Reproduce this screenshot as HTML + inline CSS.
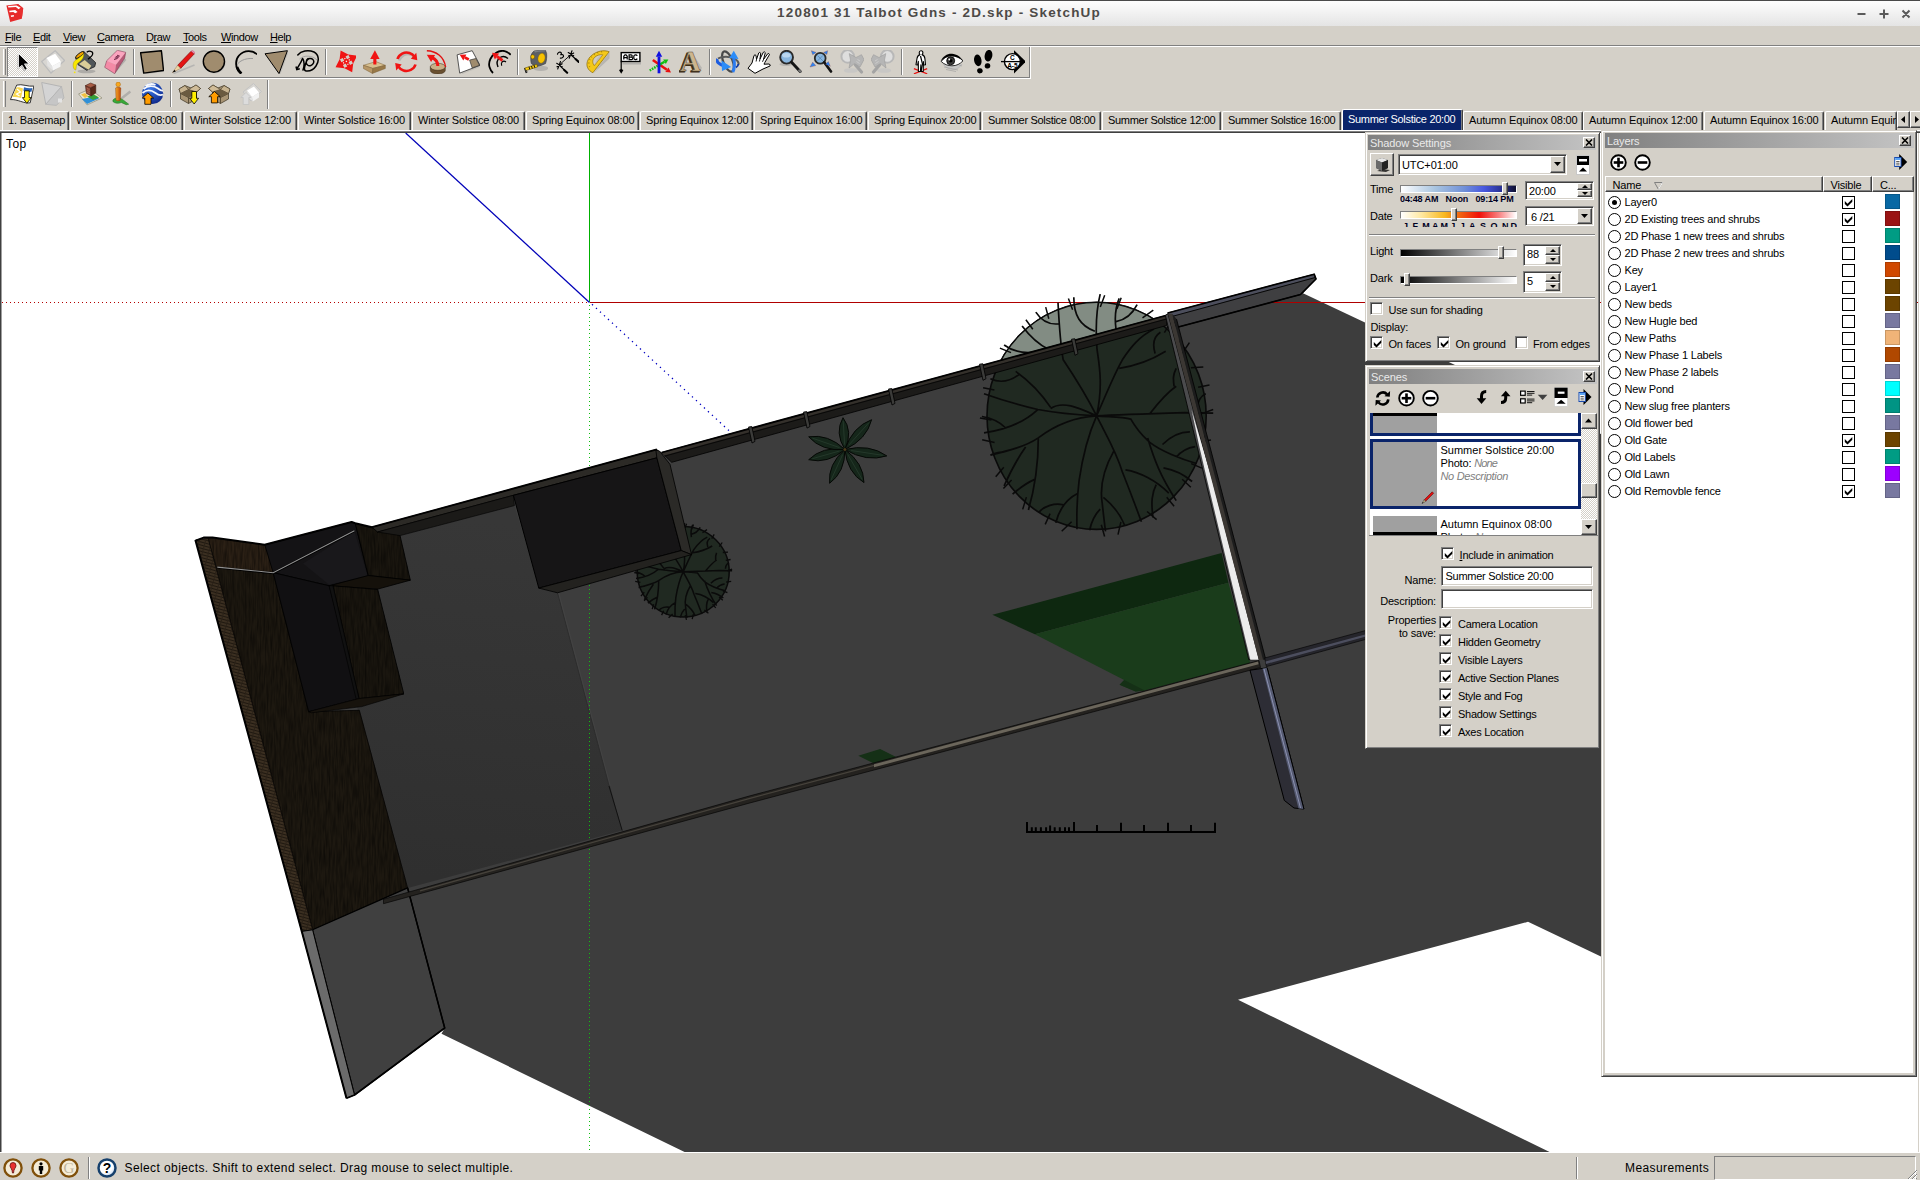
<!DOCTYPE html>
<html><head><meta charset="utf-8"><title>SketchUp</title>
<style>
*{box-sizing:border-box;margin:0;padding:0}
html,body{width:1920px;height:1180px;overflow:hidden}
body{position:relative;background:#d4d0c8;font-family:"Liberation Sans",sans-serif;font-size:11px;color:#000;line-height:13px}
.a{position:absolute}
.t{position:absolute;white-space:nowrap;line-height:13px;font-size:11px;letter-spacing:-.19px}
.m{letter-spacing:-.4px}
u{text-decoration:underline;text-underline-offset:1px}
#title{left:0;top:0;width:1920px;height:26px;background:linear-gradient(#fdfdfd 0,#f6f6f6 30%,#e4e4e4 100%);border-top:1px solid #4a4a4a}
#title .tt{left:0;width:1878px;text-align:center;top:3px;font-weight:bold;font-size:13.500px;line-height:18px;color:#4d4a47;letter-spacing:1.17px}
.sep{position:absolute;width:2px;border-left:1px solid #808080;border-right:1px solid #fff}
.grip{position:absolute;width:3px;border-left:1px solid #fff;border-right:1px solid #808080}
.tab{position:absolute;top:111px;height:19px;border-left:1px solid #fff;border-top:1px solid #fff;border-right:1px solid #404040;box-shadow:inset -1px 0 0 #808080;border-radius:2px 2px 0 0;font-size:11px;line-height:16px;padding-left:5px;white-space:nowrap;overflow:hidden;letter-spacing:-.14px}
.tab.sel{background:#0a246a;color:#fff;top:109px;height:22px;line-height:18px;border-right:1px solid #404040}
.panel{position:absolute;background:#d4d0c8;border:1px solid;border-color:#d4d0c8 #404040 #404040 #d4d0c8;box-shadow:inset 1px 1px 0 #fff,inset -1px -1px 0 #808080}
.ptitle{position:absolute;height:15px;background:linear-gradient(90deg,#808080,#c4c4c4);color:#eaeaea;font-size:11px;line-height:16px;padding-left:2px;white-space:nowrap;letter-spacing:-.1px}
.xbtn{position:absolute;width:12px;height:11px;background:#d4d0c8;border:1px solid;border-color:#fff #404040 #404040 #fff;box-shadow:inset -1px -1px 0 #808080}
.sunk{position:absolute;background:#fff;border:1px solid;border-color:#808080 #fff #fff #808080;box-shadow:inset 1px 1px 0 #404040,inset -1px -1px 0 #d4d0c8}
.cb{position:absolute;width:13px;height:13px;background:#fff;border:1px solid;border-color:#808080 #fff #fff #808080;box-shadow:inset 1px 1px 0 #404040,inset -1px -1px 0 #d4d0c8}
.cb svg{position:absolute;left:2px;top:2px}
.btn{position:absolute;background:#d4d0c8;border:1px solid;border-color:#fff #404040 #404040 #fff;box-shadow:inset -1px -1px 0 #808080,inset 1px 1px 0 #d4d0c8}
.hline{position:absolute;height:2px;border-top:1px solid #808080;border-bottom:1px solid #fff}
.ico{position:absolute;width:24px;height:24px}
.lrow{position:absolute;left:0;width:308px;height:17px}
.radio{position:absolute;left:3px;top:3px;width:13px;height:13px;border:1px solid #000;border-radius:50%;background:#fff}
.radio.on:after{content:"";position:absolute;left:3px;top:3px;width:5px;height:5px;border-radius:50%;background:#000}
.lcb{position:absolute;left:237px;top:3px;width:13px;height:13px;border:1px solid #000;background:#fff}
.lcb svg{position:absolute;left:1px;top:1px}
.sw{position:absolute;left:280px;top:0;width:15px;height:15px;box-shadow:inset 0 0 0 1px rgba(0,0,0,.16)}
i{letter-spacing:-.45px}
</style></head><body>
<div class="a" id="title">
<svg class="a" style="left:5px;top:2px" width="20" height="22" viewBox="5 3 20 22"><path d="M6.400 5.500L18 3.900l5.200 4.300-1.400 10.500-11.600 3.400z" fill="#e62a2a"/><path d="M18 3.900l5.200 4.300-1.400 10.500L18.500 9.300z" fill="#e83030"/><path d="M8.100 6.100l8.500-.5 4 2.200-2.100 1.500-2.600-2.200-7.600.5z" fill="#fff"/><path d="M9.300 10.700l5.900-.7 2.400 2.100-2.400 1.200-1.900-1.400-3.800.4z" fill="#fff"/><path d="M10.700 15.400l3.100-.5.200 1.500-2.800.7z" fill="#fff"/></svg>
<div class="t tt">120801 31 Talbot Gdns - 2D.skp - SketchUp</div>
<svg class="a" style="left:1850px;top:5px" width="66" height="16" viewBox="0 0 66 16"><g stroke="#5a5a5a" stroke-width="2" fill="none"><path d="M7.5 8h8M29.5 8h9M34 3.5v9M52.5 4.5l7 7M59.5 4.5l-7 7"/></g></svg>
</div>
<div class="t m" style="left:5px;top:31px"><u>F</u>ile</div>
<div class="t m" style="left:33px;top:31px"><u>E</u>dit</div>
<div class="t m" style="left:63px;top:31px"><u>V</u>iew</div>
<div class="t m" style="left:97px;top:31px"><u>C</u>amera</div>
<div class="t m" style="left:146px;top:31px">D<u>r</u>aw</div>
<div class="t m" style="left:183px;top:31px"><u>T</u>ools</div>
<div class="t m" style="left:221px;top:31px"><u>W</u>indow</div>
<div class="t m" style="left:270px;top:31px"><u>H</u>elp</div>
<div class="hline" style="left:0;top:45px;width:1920px"></div>
<div class="a" style="left:0;top:78px;width:1031px;height:1px;background:#fff"></div>
<div class="a" style="left:0;top:77px;width:1030px;height:1px;background:#808080"></div>
<div class="a" style="left:1029px;top:47px;width:1px;height:31px;background:#808080"></div><div class="a" style="left:1030px;top:47px;width:1px;height:32px;background:#fff"></div>
<div class="grip" style="left:3px;top:49px;height:26px"></div>
<div class="a" style="left:7px;top:47px;width:31px;height:30px;border:1px solid;border-color:#808080 #fff #fff #808080;background:#fff;background-image:conic-gradient(#d4d0c8 25%,#fff 0 50%,#d4d0c8 0 75%,#fff 0);background-size:2px 2px"></div>
<div class="sep" style="left:133px;top:49px;height:26px"></div>
<div class="sep" style="left:325px;top:49px;height:26px"></div>
<div class="sep" style="left:517px;top:49px;height:26px"></div>
<div class="sep" style="left:709px;top:49px;height:26px"></div>
<div class="sep" style="left:901px;top:49px;height:26px"></div>
<svg class="ico" style="left:10px;top:50px" viewBox="0 0 24 24"><path d="M7.500 5V19.500l3.600-2.800 2.900 4.900 2.300-1.100-2.800-5.200h4.600z" fill="#888" opacity=".5"/><path d="M8.500 3.500V18.100l3.600-2.800 2.900 4.900 2.300-1.100-2.800-5.200h4.600z" fill="#000" stroke="#fff" stroke-width=".8" stroke-linejoin="round"/></svg>
<svg class="ico" style="left:41px;top:50px" viewBox="0 0 24 24"><path d="M0.700 11.600L14.200 0.700l9.400 9.900L10 23.100z" fill="#dcdcdc" fill-opacity=".5" stroke="#bcbcbc" stroke-width="1.300"/><path d="M5.400 8l8.800-4.200 5.700 7.800-8.800 4.700z" fill="#fff"/><path d="M5.400 8l5.700 8.300 1 4.200-5.700-4.700z" fill="#e2e2e2"/><path d="M19.900 11.600l-8.800 4.700 1 4.200 7.300-3.700z" fill="#f6f6f6"/></svg>
<svg class="ico" style="left:72px;top:50px" viewBox="0 0 24 24"><ellipse cx="14.500" cy="21.300" rx="9" ry="1.900" fill="#888" opacity=".5"/><path d="M3.700 8L12 1.700l11.700 11-1 4-8 3.600L6 14.700z" fill="#50565a" stroke="#1c1c1c" stroke-width=".8" stroke-linejoin="round"/><path d="M12.700 10l6.600 5.700-2.600 4L7 14z" fill="#dacd98"/><ellipse cx="7.800" cy="4.900" rx="5.200" ry="1.600" transform="rotate(-37 7.800 4.900)" fill="#f0a000" stroke="#111" stroke-width=".9"/><path d="M14.700 2.300C17 0.500 21 1 20.700 3.700 20.500 6 17.500 8 16 9.300" fill="none" stroke="#000" stroke-width="1.300"/><path d="M11.500 3.500C10 6 7 8 5.500 9 2 10.500 0.800 13 1.200 16.500 1.500 19 3 20 3.700 20 4.500 18 4 15 5.500 13.500 7 12 9 11 10.300 9c1-1.700 1.700-3.500 1.200-5.500z" fill="#f8e800" stroke="#a08800" stroke-width=".4"/><circle cx="2.700" cy="22.300" r=".9" fill="#f8e800"/></svg>
<svg class="ico" style="left:103px;top:50px" viewBox="0 0 24 24"><path d="M11.700 23.700L23.300 10 21.700 8z" fill="#999" opacity=".6"/><path d="M3.700 10.700L14.300 0.300l8.400 2L13 14.700z" fill="#fba5bf"/><path d="M3.700 10.700L13 14.700 11.700 23.700 1.700 17.300z" fill="#f48aa6"/><path d="M13 14.700L22.700 2.300l-1 5.700L11.700 23.700z" fill="#b85876"/><path d="M3.700 10.700L14.300 0.300l8.400 2-1 5.700L11.700 23.700 1.700 17.300z" fill="none" stroke="#703048" stroke-width=".5"/><path d="M11 9.500l3.500-1M11.800 8l3.500-.3M12.800 6.500l3.200.5M14 5.200l2.800 1" stroke="#702848" stroke-width="1"/></svg>
<svg class="ico" style="left:139.5px;top:50px" viewBox="0 0 24 24"><path d="M2 4.200L22.600 2.200l1.300 19.500L5 24.300z" fill="#999" opacity=".35"/><path d="M0.600 2.800L21.400 0.700l2.100 19.800L3.700 23.100z" fill="#a08c6e" stroke="#000" stroke-width="1.400" stroke-linejoin="round"/></svg>
<svg class="ico" style="left:170.5px;top:50px" viewBox="0 0 24 24"><path d="M2.500 23.500L23.500 15" stroke="#aaa" stroke-width="1.800" opacity=".7"/><path d="M6.600 15.300L20.100 1.200l3.200 2.600L9.700 18.400z" fill="#e41414" stroke="#700" stroke-width=".6"/><path d="M20.100 1.200l1.200-1 2.900 2.600-.9 1z" fill="#f494b4" stroke="#a04060" stroke-width=".4"/><path d="M6.600 15.300l3.100 3.100-8.300 4.200z" fill="#ecd4a4" stroke="#806040" stroke-width=".4"/><path d="M3.600 19.800l1.200 1.600-3.400 1.200z" fill="#000"/></svg>
<svg class="ico" style="left:201.5px;top:50px" viewBox="0 0 24 24"><circle cx="12.800" cy="12.600" r="10.700" fill="#999" opacity=".35"/><circle cx="11.900" cy="11.600" r="10.600" fill="#a08c6e" stroke="#000" stroke-width="1.400"/></svg>
<svg class="ico" style="left:232.5px;top:50px" viewBox="0 0 24 24"><path d="M20 8.500C12 8 5 11 2.300 17.500" fill="none" stroke="#999" stroke-width="1"/><path d="M24 4.500C20 0 11.500-0.500 6 5.500 1.500 10.500 2.500 19 7.500 23" fill="none" stroke="#000" stroke-width="1.800"/><path d="M4 17c.8 2.500 2 4.500 4.500 6.500" fill="none" stroke="#000" stroke-width="2.600"/></svg>
<svg class="ico" style="left:263.5px;top:50px" viewBox="0 0 24 24"><path d="M3 5L24.400 2.400 16.500 24z" fill="#999" opacity=".35"/><path d="M1 3.800L23.400 0.700 15 23.600z" fill="#a08c6e" stroke="#000" stroke-width="1"/></svg>
<svg class="ico" style="left:294.5px;top:50px" viewBox="0 0 24 24"><path d="M4.500 9C9 5 17 5 22 10" fill="none" stroke="#999" stroke-width=".8"/><path d="M2.800 5C6 1 13-0.500 19 2c5 2.500 5.500 9 2 14-2 3-6 5.500-10 5-2.500-.5-1.500-4-0.500-7 .8-2.500 1.500-5 4-5.500 3-.5 5 2 4 4.500-1 2.500-4 3.500-6 2-2-1.500-1.500-5 .5-6.500M7.500 8.500C6 13 3.500 16 1.800 19M8 9c1.500 3 1 8 0 11" fill="none" stroke="#000" stroke-width="1.500" stroke-linecap="round"/><path d="M1 16.500l.8 3 3-.8" fill="none" stroke="#000" stroke-width="1.500"/></svg>
<svg class="ico" style="left:331.5px;top:50px" viewBox="0 0 24 24"><g transform="translate(.7 -.2) rotate(-28 13.700 11.600)"><path d="M13.700 -0.700L18.900 6.800H15.300V11.600H12.100V6.800H8.500z" fill="#f01414" transform="rotate(0 13.700 11.600)"/><path d="M13.700 -0.700L18.900 6.800H15.300V11.600H12.100V6.800H8.500z" fill="#f01414" transform="rotate(90 13.700 11.600)"/><path d="M13.700 -0.700L18.900 6.800H15.300V11.600H12.100V6.800H8.500z" fill="#f01414" transform="rotate(180 13.700 11.600)"/><path d="M13.700 -0.700L18.900 6.800H15.300V11.600H12.100V6.800H8.500z" fill="#f01414" transform="rotate(270 13.700 11.600)"/><g fill="#f4ece4"><rect x="13" y="10.900" width="1.400" height="1.400"/><rect x="13.100" y="7.800" width="1.200" height="1.200"/><rect x="13.100" y="14.200" width="1.200" height="1.200"/><rect x="9.900" y="11" width="1.200" height="1.200"/><rect x="16.300" y="11" width="1.200" height="1.200"/></g></g></svg>
<svg class="ico" style="left:362.5px;top:50px" viewBox="0 0 24 24"><path d="M0.400 15.300L12.900 11.600l9.400 3.700L9.800 18.400z" fill="#d8c090" stroke="#7a6038" stroke-width=".5"/><path d="M0.400 15.300v3.200l9 4.900.4-5z" fill="#b89868" stroke="#7a6038" stroke-width=".5"/><path d="M9.800 18.400l12.500-3.100v3.200L9.400 23.400z" fill="#987848" stroke="#7a6038" stroke-width=".5"/><path d="M10.300 8.500h3.100v6h-3.100z" fill="#f01414"/><path d="M7.200 9L11.900 0.200 16.600 9z" fill="#f01414"/></svg>
<svg class="ico" style="left:393.5px;top:50px" viewBox="0 0 24 24"><path d="M4.500 9.500C6 4.500 11 2 16 3.500c2 .6 3.500 2 4.500 3.500" fill="none" stroke="#999" stroke-width="2.600" opacity=".5" transform="translate(.8 1)"/><path d="M3.500 9C5 4 10.500 1.500 15.500 3c2.300.7 4 2 5 3.800" fill="none" stroke="#f01414" stroke-width="2.600"/><path d="M23.300 10.200L16.800 8.800 22.300 2.800z" fill="#f01414"/><path d="M21.500 14.500c-1.500 5-7 7.500-12 6-2.300-.7-4-2-5-3.800" fill="none" stroke="#f01414" stroke-width="2.600"/><path d="M1.200 13L7.700 14.500 2.200 20.500z" fill="#f01414"/></svg>
<svg class="ico" style="left:424.5px;top:50px" viewBox="0 0 24 24"><path d="M5.300 16.800v3.700a7.500 3.500 0 0 0 15 0v-3.700z" fill="#6a5030" stroke="#3a2a18" stroke-width=".5"/><ellipse cx="12.800" cy="16.800" rx="7.500" ry="3.500" fill="#c8b088" stroke="#3a2a18" stroke-width=".5"/><path d="M1.850 0.700C11 1 19 6.500 20.600 17" fill="none" stroke="#e01010" stroke-width="1.400"/><path d="M12.800 16c0-4-2.500-7-6-8.500" fill="none" stroke="#f01414" stroke-width="3"/><path d="M1.800 4.800l8.300.3-4 6.800z" fill="#f01414"/></svg>
<svg class="ico" style="left:455.5px;top:50px" viewBox="0 0 24 24"><path d="M2.500 6L17.500 2l7.700 14.500-19.300 7.700z" fill="#999" opacity=".3"/><path d="M1.100 4.850L16.200 0.700 24 15.300 3.700 23.100z" fill="#fff" stroke="#444" stroke-width=".9"/><path d="M13.600 10.100l6.200-1.600 3.700 6.800-7.300 2.600z" fill="#a08c6e" stroke="#333" stroke-width=".7"/><path d="M12.8 9.5L8.9 7.5" stroke="#f01414" stroke-width="2.6"/><path d="M3.7 4.8L10.4 4.5L7.3 10.5z" fill="#f01414"/></svg>
<svg class="ico" style="left:486.5px;top:50px" viewBox="0 0 24 24"><path d="M23.700 4.850C20 1 15 -0.500 9.500 2.500 4 5.500 1 12 2.500 17c.7 2.500 2 4.500 3.500 6" fill="none" stroke="#000" stroke-width="1.800"/><path d="M21 8.500c-2.500-2-6-2.500-8.500-.5-2.500 2-3 5.500-1.500 9" fill="none" stroke="#000" stroke-width="1.400"/><path d="M19 12c-1.200-1-3-1-4 .2-.8 1-.8 2.300-.2 3.500" fill="none" stroke="#000" stroke-width="1.100"/><path d="M15.5 10.5L10.0 6.5" stroke="#f01414" stroke-width="2.8"/><path d="M5.0 2.8L12.1 3.6L7.9 9.4z" fill="#f01414"/></svg>
<svg class="ico" style="left:523.5px;top:50px" viewBox="0 0 24 24"><ellipse cx="16.800" cy="18.300" rx="7.500" ry="2.600" fill="#999" opacity=".55"/><path d="M10 1.100C13.500 0.300 18.500 0 21.500 0.400l1.100 3c.3 3.500 0 7-1.100 10.200-2.500 1.300-5.300 2.200-8.100 2.700-2.300-.5-4.500-1.400-6.100-2.700C6.700 11 6.600 8 7 5.500c.6-1.800 1.600-3.400 3-4.400z" fill="#5c5f64" stroke="#33353a" stroke-width=".6"/><path d="M10 1.100C13.500 0.300 18.500 0 21.500 0.400l-1 1.200c-3-.3-6.500 0-9.500.9z" fill="#7c8086"/><ellipse cx="17.500" cy="8.200" rx="3.500" ry="5" transform="rotate(12 17.500 8.200)" fill="#f8c200" stroke="#8a6a00" stroke-width=".4"/><ellipse cx="8.700" cy="6.800" rx="1.900" ry="2.100" fill="#f8c200" stroke="#6a5200" stroke-width=".5"/><path d="M12.750 14.300l.9 2.600L1.500 20.700l-.9-2.600z" fill="#f8cc10" stroke="#4a3a00" stroke-width=".5"/><path d="M10 15.200l.8 2.500M7.500 16l.8 2.500M5 16.800l.8 2.500" stroke="#000" stroke-width=".9"/><path d="M0.600 18l1.300 4.800 1.200-.5-.8-2" fill="none" stroke="#222" stroke-width="1"/></svg>
<svg class="ico" style="left:554.5px;top:50px" viewBox="0 0 24 24"><g fill="none" stroke="#000" stroke-linecap="round"><path d="M5.400 13.900L14.900 5.500" stroke-width=".9"/><path d="M15.900 4.800L23.700 11.900M4.800 15.600l7.400 7.100" stroke-width="1.200"/><path d="M20.500 9l3.200 2.900M9 19.700l3.200 3" stroke-width="2"/><path d="M17 0.700l-2.800 7.500M13.200 2.500l5.500 3.300M13.500 6l5.200-3" stroke-width="1.100"/><path d="M5.500 11.500l-2.800 7.500M1.700 13.300l5.500 3.300M2 16.800l5.200-3" stroke-width="1.100"/><g transform="rotate(-35 5.400 4.800)"><path d="M3.400 2.600c1.300-1.300 3.800-.8 3.800.9 0 1-1 1.500-1.900 1.500 1.300 0 2.400.7 2.200 2-.3 1.500-2.700 1.700-4 .5" stroke-width="1.200"/></g></g></svg>
<svg class="ico" style="left:585.5px;top:50px" viewBox="0 0 24 24"><path d="M7.500 23.300L23.500 8.500V2.500z" fill="#999" opacity=".5"/><path d="M6.900 22.700L23.200 1.750C18 -0.300 11 0.800 5.500 5.500 1.500 9 0 13.500 1.500 17.500c1 2.300 3 4.200 5.400 5.200z" fill="#f4c81a" stroke="#8a6800" stroke-width=".7"/><path d="M8.300 15.600L16.800 4.800C13.800 4.300 10.500 5.300 8.300 7.700 6.200 10 6.300 13.300 8.300 15.600z" fill="#d0ccc4" stroke="#8a6800" stroke-width=".6"/><path d="M8.300 15.600l8.500-10.800c-2 .5-4 1.800-5.500 3.700z" fill="#b8b4ac" opacity=".6"/><path d="M9.500 19l11-14.300" stroke="#a88400" stroke-width=".5" stroke-dasharray=".6 1.200"/><path d="M3 9l1.500.8M5 6.500l1.200 1.100M8 3.800l.8 1.400M11.500 2l.5 1.500M15.500 1l.2 1.500M2 13l1.600 0M2.800 17l1.400-.7" stroke="#8a6800" stroke-width=".6"/></svg>
<svg class="ico" style="left:616.5px;top:50px" viewBox="0 0 24 24"><path d="M6.400 14.500V13.600H24.500V5" fill="none" stroke="#999" stroke-width="1.800" opacity=".6"/><rect x="4.200" y="2.600" width="18.700" height="8.900" fill="#fff" stroke="#000" stroke-width="1.400"/><g fill="none" stroke="#000" stroke-width="1.250"><path d="M6.800 9.600V6.200l1.200-1.400h1l1.200 1.400v3.400M6.800 7.600h3.400"/><path d="M12.100 4.800v4.800h2.300c1.700 0 1.700-2.400 0-2.400h-2.300 2c1.500 0 1.500-2.400 0-2.400z"/><path d="M20.300 5.800c-.8-1.400-3.500-1.400-3.500.6v1.600c0 2 2.700 2 3.500.6"/></g><path d="M4.200 11.500v9" stroke="#000" stroke-width="1.200"/><path d="M4.200 23.750l-2.200-3.800 2.200-1 2.200 1z" fill="#000"/></svg>
<svg class="ico" style="left:647.5px;top:50px" viewBox="0 0 24 24"><path d="M4.8 10.0L18.9 19.7" stroke="#e81010" stroke-width="2.6"/><path d="M23.0 22.5L17.3 22.0L20.5 17.4z" fill="#e81010"/><path d="M1.700 20.500L11 15" stroke="#10c010" stroke-width="2.400" stroke-dasharray="1.600 1"/><path d="M11.0 15.0L16.5 11.8" stroke="#10c010" stroke-width="2.4"/><path d="M20.4 9.5L17.8 14.0L15.2 9.5z" fill="#10c010"/><path d="M11.0 23.3L11.0 6.7" stroke="#1010e0" stroke-width="2.8"/><path d="M11.0 0.7L14.2 6.7L7.8 6.7z" fill="#1010e0"/></svg>
<svg class="ico" style="left:678.5px;top:50px" viewBox="0 0 24 24"><path d="M14 4l9 14-2.500 3z" fill="#999" opacity=".5"/><text x="10" y="21.500" text-anchor="middle" font-family="Liberation Serif" font-weight="bold" font-size="29" fill="#3a2c18" stroke="#3a2c18" stroke-width="1">A</text><text x="11.500" y="20.500" text-anchor="middle" font-family="Liberation Serif" font-weight="bold" font-size="29" fill="#cdb68e" stroke="#5a462a" stroke-width=".5">A</text></svg>
<svg class="ico" style="left:715.5px;top:50px" viewBox="0 0 24 24"><ellipse cx="12" cy="11.500" rx="4.600" ry="10.800" transform="rotate(-22 12 11.500)" fill="none" stroke="#4a4a4a" stroke-width="2.200"/><path d="M2 8.500c4-2.500 12-2.500 17 .5 2.500 1.500 4 3.500 3.500 5.500" fill="none" stroke="#5a5a5a" stroke-width="2"/><path d="M1.500 9c-1.500 2.500 1.500 5.500 7 7" fill="none" stroke="#1c5ce0" stroke-width="3"/><path d="M5.500 10.500L15.200 17 6 21z" fill="#2c8cf8"/><path d="M16.800 22c2-4 2-9 .8-14" fill="none" stroke="#2c7cf0" stroke-width="3"/><path d="M13.300 8L17.800 0.800 22.500 9z" fill="#2c8cf8"/><path d="M20 17.500c1.500-.8 2.300-2 2.300-3.500" fill="none" stroke="#1038a0" stroke-width="1.800"/></svg>
<svg class="ico" style="left:746.5px;top:50px" viewBox="0 0 24 24"><path d="M1 18.300L5 13 7 5.500Q8 4 9 5.500L9.500 9.500 11.700 3Q12.700 1.800 13.700 3.200L13 9 16.300 2.300Q17.500 1.200 18.300 2.700L16.500 9.500 20.700 3.800Q22 3 22.500 4.500L17.800 12.500 17 14.200 22 14Q24 14.700 23 16L16 19 8 23.300z" fill="#fff" stroke="#000" stroke-width="1" stroke-linejoin="round"/><path d="M9.500 9.500l-.4 2M13 9l-.6 2.500M16.500 9.500l-1 2.300" stroke="#000" stroke-width=".9"/></svg>
<svg class="ico" style="left:777.5px;top:50px" viewBox="0 0 24 24"><ellipse cx="8" cy="14.300" rx="6.500" ry="1.800" fill="#999" opacity=".5"/><circle cx="8.600" cy="7.200" r="6.400" fill="#8ab6de" stroke="#2a2a2a" stroke-width="1.900"/><ellipse cx="8.300" cy="5.300" rx="4.200" ry="2.300" fill="#cfe4f6" opacity=".7"/><path d="M13.600 12.200l8.600 9.300" stroke="#151515" stroke-width="2.900" stroke-linecap="round"/><path d="M21.300 20.500l1 1" stroke="#777" stroke-width="2.400" stroke-linecap="round"/></svg>
<svg class="ico" style="left:808.5px;top:50px" viewBox="0 0 24 24"><circle cx="11.200" cy="8.200" r="5.400" fill="#8ab6de" stroke="#2a2a2a" stroke-width="1.800"/><path d="M8.500 5.500l5.400 5.400M13.900 5.500l-5.400 5.400" stroke="#5c88b4" stroke-width=".8"/><path d="M15.200 12.300l6.800 9.200" stroke="#151515" stroke-width="2.700" stroke-linecap="round"/><g fill="#2c84f4" stroke="#8a3030" stroke-width=".3"><path d="M2.350 0.700L7.100 2.400 3.700 4.800z"/><path d="M18.600 0.700L14.500 2.400l3.400 2.100z"/><path d="M1 17l2.700-4.800 3.050 3.400z"/><path d="M21.300 16.300l-2-4.700-2.700 2.700z"/></g></svg>
<svg class="ico" style="left:839.5px;top:50px" viewBox="0 0 24 24"><ellipse cx="10.800" cy="20.500" rx="7" ry="2.300" fill="#c4c4c4" opacity=".8"/><circle cx="7.700" cy="6.400" r="6.300" fill="#dedede" stroke="#b8b8b8" stroke-width="2"/><path d="M15.500 15l6 7" stroke="#a4a4a4" stroke-width="3.200" stroke-linecap="round"/><path d="M9.200 3.600L16 7.500l5.500-2.800L24 9.500 20 17l-5.500-3.500L9 18l1.500-8z" fill="#b6b6b6" stroke="#9c9c9c" stroke-width=".6" stroke-linejoin="round"/><path d="M16.500 11.500l3 2M17.500 9.500l2.500 1.500" stroke="#d0d0d0" stroke-width=".8"/></svg>
<svg class="ico" style="left:870.5px;top:50px" viewBox="0 0 24 24"><g transform="translate(24 0) scale(-1 1)"><ellipse cx="10.800" cy="20.500" rx="7" ry="2.300" fill="#c4c4c4" opacity=".8"/><circle cx="7.700" cy="6.400" r="6.300" fill="#dedede" stroke="#b8b8b8" stroke-width="2"/><path d="M15.500 15l6 7" stroke="#a4a4a4" stroke-width="3.200" stroke-linecap="round"/><path d="M9.200 3.600L16 7.500l5.500-2.800L24 9.500 20 17l-5.500-3.500L9 18l1.500-8z" fill="#b6b6b6" stroke="#9c9c9c" stroke-width=".6" stroke-linejoin="round"/><path d="M16.500 11.500l3 2M17.500 9.500l2.500 1.500" stroke="#d0d0d0" stroke-width=".8"/></g></svg>
<svg class="ico" style="left:907.5px;top:50px" viewBox="0 0 24 24"><path d="M5.900 18.600l13.300 5.200M19.200 18.600L5.900 23.800" stroke="#e81010" stroke-width="1.300"/><path d="M13 0.800c1.200 0 1.900.9 1.900 2 0 .8-.4 1.400-.9 1.800 1.800.5 2.700 2 2.900 4l.6 6.200-1.700.2-.4-3.500-.2 10h-2l-.3-6.800-.5 6.800h-2l-.1-10.200-.7 3.700-1.600-.3 1-6.200c.3-2 1.300-3.400 3-3.900-.5-.4-.8-1-.8-1.800 0-1.100.7-2 1.800-2z" fill="#fff" stroke="#000" stroke-width="1.100" stroke-linejoin="round"/><path d="M12.500 6l2 8-1.500 7" fill="none" stroke="#000" stroke-width="1.200"/></svg>
<svg class="ico" style="left:938.5px;top:50px" viewBox="0 0 24 24"><path d="M4 14c2 3 6 5.500 10 5.500 4 0 7.500-2.500 9-5.500" fill="#c8c8c8" stroke="#aaa" stroke-width=".5"/><path d="M2.300 11.600C5 7.500 9 5.800 12.500 5.800c4 0 8.500 2 11.500 5-3 3.200-6.500 5-11 5-4 0-8-1.500-10.700-4.200z" fill="#fff" stroke="#000" stroke-width=".8"/><path d="M1.500 11.500C4 6 8.500 3.500 13 3.800c4.500.3 8.500 3 11 7-3-3-7.500-4.500-11.500-4.500S5 8 1.500 11.500z" fill="#000"/><circle cx="11.700" cy="10.800" r="4" fill="#3a3a3a" stroke="#000" stroke-width=".8"/><circle cx="11.700" cy="10.800" r="1.800" fill="#000"/><circle cx="10.300" cy="9.500" r=".9" fill="#fff"/><path d="M5 17l14 3M7 19.500l10 2M20 15l3 1" stroke="#999" stroke-width=".6"/></svg>
<svg class="ico" style="left:969.5px;top:50px" viewBox="0 0 24 24"><g fill="#000"><ellipse cx="7.800" cy="10.300" rx="3.700" ry="5.900" transform="rotate(-10 7.800 10.300)"/><ellipse cx="9.900" cy="20.800" rx="2.800" ry="2.600" transform="rotate(-10 9.900 20.800)"/><ellipse cx="18.500" cy="5.700" rx="3.800" ry="5.900" transform="rotate(10 18.500 5.700)"/><ellipse cx="17.500" cy="15.900" rx="2.800" ry="2.600" transform="rotate(10 17.500 15.900)"/></g></svg>
<svg class="ico" style="left:1000.5px;top:50px" viewBox="0 0 24 24"><path d="M13 0.200L25 11.600 13 23.400z" fill="#000"/><path d="M0 11.600h22" stroke="#000" stroke-width="1.300"/><circle cx="11.400" cy="11.600" r="8" fill="#fff" stroke="#000" stroke-width="1.400"/><path d="M3.400 11.600h16" stroke="#000" stroke-width="1.300"/><text x="11.400" y="9.800" text-anchor="middle" font-family="Liberation Sans" font-weight="bold" font-size="6.500" fill="#000">C</text><text x="11.400" y="18.300" text-anchor="middle" font-family="Liberation Sans" font-weight="bold" font-size="6.500" fill="#000" textLength="10.500" lengthAdjust="spacingAndGlyphs">A-5</text></svg>
<div class="grip" style="left:3px;top:81px;height:26px"></div>
<div class="sep" style="left:71px;top:81px;height:26px"></div>
<div class="sep" style="left:170px;top:81px;height:26px"></div>
<div class="sep" style="left:267px;top:80px;height:29px"></div>
<svg class="ico" style="left:10px;top:82px" viewBox="0 0 24 24"><path d="M6.700 3.100C12 1.500 18 5 23.900 4.100L20.200 20.800C14 22 8 17 0.400 17.600z" fill="#fff" stroke="#222" stroke-width=".9"/><path d="M6.500 5.500c2.500-.5 4.500.5 6.500 1l-2 9.500c-2.500-1-5.500-1.300-8.500-1z" fill="#f8d850"/><path d="M7 7l3.500 3-4 2 3 2" fill="none" stroke="#fff" stroke-width="1.200"/><path d="M14 5.300c3 1 5.500 1.200 8.300.8l-.8 3.700c-2.800.3-5.500 0-8.100-1z" fill="#2860b0"/><path d="M14.5 8.8h4.700v6.800h2.100l-4.450 5.700-4.450-5.700h2.100z" fill="#ffee00" stroke="#000" stroke-width=".8" stroke-linejoin="round"/></svg>
<svg class="ico" style="left:41px;top:82px" viewBox="0 0 24 24"><path d="M0.700 0.500L20.500 4.600 4.800 22.300z" fill="#d4d4d4" stroke="#b4b4b4" stroke-width="1"/><path d="M4.800 22.300L20.500 4.600 23 16 15.300 23.400z" fill="#c6c6c6" stroke="#b4b4b4" stroke-width=".8"/><path d="M17 16.500h4v4h-4z" fill="#e4e4e4"/></svg>
<svg class="ico" style="left:77.5px;top:82px" viewBox="0 0 24 24"><path d="M0.600 11.900L12 7l12 9-15 6.900z" fill="#ece4cc" stroke="#8a8a7a" stroke-width=".7"/><path d="M4 17l5 5 12-5.500-3-2.200z" fill="#3090d8"/><path d="M9 14.500l6 3.500 6-2.500-5-3z" fill="#38a038"/><path d="M3 12.500l4-1.500 3 3-3 2z" fill="#f0c040"/><path d="M7.400 3.600l5.200 2.100.5 8.300-4.700-2.600z" fill="#8c4634" stroke="#3a1810" stroke-width=".5"/><path d="M12.600 5.700l5.200-2.600v7.800l-4.700 3.100z" fill="#5a2a1a" stroke="#3a1810" stroke-width=".5"/><path d="M7.400 3.600L12.600 1l5.200 2.100-5.200 2.600z" fill="#a85c44" stroke="#3a1810" stroke-width=".5"/><path d="M9 6.500l2.500 1M9.200 8.500l2.500 1M9.400 10.500l2.500 1" stroke="#c88870" stroke-width=".5"/></svg>
<svg class="ico" style="left:108.5px;top:82px" viewBox="0 0 24 24"><path d="M12.400 16.500l9-7" stroke="#999" stroke-width="2.500" opacity=".6"/><path d="M4 18c1-1.500 3-2.200 5.500-2 2 .2 3.500 1 5 2.200l5.200 4-2.500.5-5-2.200c-1.500.8-3.500 1-5.500.5-2-.5-3.500-1.500-2.700-3z" fill="#38a838" stroke="#1a6a1a" stroke-width=".5"/><defs><linearGradient id="pg" x1="0" x2="1"><stop offset="0" stop-color="#f8a828"/><stop offset="1" stop-color="#c04808"/></linearGradient></defs><path d="M6.600 6c0-1 5.200-1 5.200 0l-.5 12.200c-.8.800-3.400.8-4.200 0z" fill="url(#pg)" stroke="#803000" stroke-width=".4"/><circle cx="9.200" cy="2.400" r="2.300" fill="#f8a820" stroke="#a05800" stroke-width=".4"/></svg>
<svg class="ico" style="left:139.5px;top:82px" viewBox="0 0 24 24"><defs><radialGradient id="eg" cx=".4" cy=".3" r=".8"><stop offset="0" stop-color="#3a78e8"/><stop offset="1" stop-color="#0a2080"/></radialGradient></defs><circle cx="12.600" cy="11.400" r="10.600" fill="url(#eg)"/><path d="M3.500 7C8 3 14 3.500 18 6.500c2.500 2 4 2.500 5 2M2.500 11c4-3.500 9-3 13 0 3 2.300 5.500 2.500 7.500 1.500M5.500 4c3-2 7-2.500 10-1" fill="none" stroke="#fff" stroke-width="1.800" opacity=".95"/><path d="M7.9 10.9l5.700 5.200h-2.600v6.200h-6.200v-6.200h-2.600z" fill="#ff9c00" stroke="#000" stroke-width=".8" stroke-linejoin="round"/></svg>
<svg class="ico" style="left:177px;top:82px" viewBox="0 0 24 24"><path d="M2 7l6-3.500 6 2.500 5-3 4.500 3.500-4 3.500v7l-8 4.500-8-4.500v-6z" fill="#a89474" stroke="#3a3020" stroke-width=".7"/><path d="M3.500 11.500l8 4 8-5.500" fill="none" stroke="#3a3020" stroke-width=".7"/><path d="M11.500 15.500v6" stroke="#3a3020" stroke-width=".7"/><path d="M3.500 11.500L2 7l6-3.500 3.500 4z" fill="#c8b490" stroke="#3a3020" stroke-width=".6"/><path d="M11.500 7.500L14 6l5-3 4.500 3.500-4 3.500z" fill="#d0bc98" stroke="#3a3020" stroke-width=".6"/><path d="M3.500 11.500l8-4 8 2.500-8 5.500z" fill="#6a5a40"/><path d="M14.8 9.5h4.700v6.800h2.100l-4.450 5.700-4.450-5.700h2.100z" fill="#ffee00" stroke="#000" stroke-width=".8" stroke-linejoin="round"/></svg>
<svg class="ico" style="left:208px;top:82px" viewBox="0 0 24 24"><g transform="translate(24 0) scale(-1 1)"><path d="M2 7l6-3.500 6 2.500 5-3 4.500 3.500-4 3.500v7l-8 4.500-8-4.500v-6z" fill="#a89474" stroke="#3a3020" stroke-width=".7"/><path d="M3.500 11.500l8 4 8-5.500" fill="none" stroke="#3a3020" stroke-width=".7"/><path d="M11.500 15.500v6" stroke="#3a3020" stroke-width=".7"/><path d="M3.500 11.500L2 7l6-3.500 3.500 4z" fill="#c8b490" stroke="#3a3020" stroke-width=".6"/><path d="M11.500 7.500L14 6l5-3 4.500 3.500-4 3.500z" fill="#d0bc98" stroke="#3a3020" stroke-width=".6"/><path d="M3.500 11.500l8-4 8 2.500-8 5.500z" fill="#6a5a40"/></g><path d="M6.5 9.5l5.700 5.200h-2.600v6.200h-6.200v-6.200h-2.600z" fill="#ff9c00" stroke="#000" stroke-width=".8" stroke-linejoin="round"/></svg>
<svg class="ico" style="left:239px;top:82px" viewBox="0 0 24 24"><path d="M4 10L14.500 1.500l8 8L12 19z" fill="#dcdcdc" fill-opacity=".5" stroke="#c4c4c4" stroke-width="1"/><path d="M8 8.500l7-4 5 6-7 4.500z" fill="#fff"/><path d="M20 10.500l-7 4.500.8 4.500 6.200-4z" fill="#f2f2f2"/><path d="M8 8.500l5 6.500.8 4.500-5-5z" fill="#e4e4e4"/><path d="M7 10.500l5.200 5h-2.400v7h-5.600v-7h-2.400z" fill="#dcdcdc" stroke="#c0c0c0" stroke-width=".7"/></svg>
<div class="tab" style="left:2px;width:67px">1. Basemap</div>
<div class="tab" style="left:70px;width:113px">Winter Solstice 08:00</div>
<div class="tab" style="left:184px;width:113px">Winter Solstice 12:00</div>
<div class="tab" style="left:298px;width:113px">Winter Solstice 16:00</div>
<div class="tab" style="left:412px;width:113px">Winter Solstice 08:00</div>
<div class="tab" style="left:526px;width:113px">Spring Equinox 08:00</div>
<div class="tab" style="left:640px;width:113px">Spring Equinox 12:00</div>
<div class="tab" style="left:754px;width:113px">Spring Equinox 16:00</div>
<div class="tab" style="left:868px;width:113px">Spring Equinox 20:00</div>
<div class="tab" style="left:982px;width:119px;letter-spacing:-.3px">Summer Solstice 08:00</div>
<div class="tab" style="left:1102px;width:119px;letter-spacing:-.3px">Summer Solstice 12:00</div>
<div class="tab" style="left:1222px;width:119px;letter-spacing:-.3px">Summer Solstice 16:00</div>
<div class="tab sel" style="left:1342px;width:121px;letter-spacing:-.3px">Summer Solstice 20:00</div>
<div class="tab" style="left:1463px;width:120px">Autumn Equinox 08:00</div>
<div class="tab" style="left:1583px;width:120px">Autumn Equinox 12:00</div>
<div class="tab" style="left:1704px;width:120px">Autumn Equinox 16:00</div>
<div class="tab" style="left:1825px;width:72px">Autumn Equinox 20:00</div>
<div class="btn" style="left:1897px;top:111px;width:13px;height:17px"><svg class="a" style="left:2px;top:4px" width="6" height="7"><path d="M5 0v7L1 3.5z" fill="#000"/></svg></div>
<div class="btn" style="left:1910px;top:111px;width:13px;height:17px"><svg class="a" style="left:3px;top:4px" width="6" height="7"><path d="M1 0v7l4-3.500z" fill="#000"/></svg></div>
<div class="a" style="left:0;top:130px;width:1920px;height:1px;background:#fff"></div>
<div class="a" style="left:0;top:131px;width:1920px;height:1px;background:#808080"></div>
<div class="a" style="left:0;top:132px;width:1920px;height:1px;background:#404040"></div>
<svg class="a" style="left:0;top:133px" width="1920" height="1019" viewBox="0 133 1920 1019">
<defs><linearGradient id="yg" gradientUnits="userSpaceOnUse" x1="440" y1="880" x2="480" y2="520"><stop offset="0" stop-color="#2f2f2f"/><stop offset="1" stop-color="#373737"/></linearGradient>
<pattern id="brick" width="6" height="3" patternUnits="userSpaceOnUse" patternTransform="rotate(15)"><rect width="6" height="3" fill="#3b2f21"/><rect width="6" height="1" fill="#1f1810"/><rect x="2" width="1" height="3" fill="#2a2117"/></pattern>
<clipPath id="abovefence"><polygon points="900,250 1300,250 1300,279.300 1167.700,315.200 900,388"/></clipPath>
<filter id="grain" x="0" y="0" width="1" height="1" color-interpolation-filters="sRGB"><feTurbulence type="fractalNoise" baseFrequency="0.55 0.06" numOctaves="2" seed="4" result="n"/><feColorMatrix in="n" type="matrix" values="0 0 0 0 0  0 0 0 0 0  0 0 0 0 0  0 0 0 0.9 -0.3" result="a"/><feComposite in="a" in2="SourceGraphic" operator="in" result="m"/><feMerge><feMergeNode in="SourceGraphic"/><feMergeNode in="m"/></feMerge></filter>
</defs>
<rect x="0" y="133" width="1920" height="1019" fill="#fff"/>
<polygon points="196.0,540.0 208.0,538.0 265.0,545.0 352.0,522.0 355.0,523.0 372.0,527.2 657.0,449.6 661.7,452.5 1167.7,315.0 1168.0,313.0 1314.2,274.2 1316.0,279.0 1303.0,293.2 1603.0,435.0 1603.0,957.4 1528.0,921.8 1238.0,999.8 1549.6,1152.0 684.6,1152.0 441.5,1033.8 444.7,1028.0 354.5,1095.0 346.5,1098.2 301.8,931.4" fill="#3d3d3d"/>
<polygon points="385.0,532.0 400.0,535.6 514.4,505.6 540.0,588.0 557.4,592.5 622.2,830.5 408.0,888.0 355.0,700.0" fill="url(#yg)"/>
<polyline points="609.0,786.0 622.2,830.5" fill="none" stroke="#111" stroke-width="1"/>
<polyline points="557.4,592.5 609.0,786.0" fill="none" stroke="#2e2e2e" stroke-width="1"/>
<polyline points="558.6,592.2 610.2,785.7" fill="none" stroke="#434343" stroke-width="1"/>
<g shape-rendering="crispEdges">
<path d="M590 302.500H1920" stroke="#b00000" stroke-width="1"/>
<path d="M587 302.500H0" stroke="#b40000" stroke-width="1" stroke-dasharray="1 3"/>
<path d="M589.500 133V302" stroke="#00b000" stroke-width="1"/>
<path d="M589.500 305V1152" stroke="#10c010" stroke-width="1" stroke-dasharray="1 3"/>
</g>
<path d="M405.700 133L589.500 302.500" stroke="#0000b8" stroke-width="1.250"/>
<path d="M592 304.300L730 431.600" stroke="#0000c0" stroke-width="1.300" stroke-dasharray="1.300 4.140"/>
<polygon points="992.4,614.8 1221.6,552.9 1228.4,582.7 1034.8,634.3" fill="#0e2810"/>
<polygon points="1034.8,634.3 1228.4,582.7 1250.2,662.9 1144.8,690.4 1135.6,691.6 1119.6,684.7 1124.2,680.1" fill="#1a3c1b"/>
<polygon points="1119.6,684.7 1124.2,680.1 1144.8,690.4 1135.6,691.6" fill="#153016"/>
<polygon points="858.3,755.7 880.1,748.9 896.1,756.9 874.4,763.8" fill="#153016"/>
<ellipse cx="1096.6" cy="415.9" rx="109.6" ry="113.5" fill="#202921" stroke="#0a0a0a" stroke-width="1.6"/>
<ellipse cx="1096.600" cy="415.900" rx="109.600" ry="113.500" fill="#828c83" stroke="#0a0a0a" stroke-width="1.300" clip-path="url(#abovefence)"/>
<path d="M1096.6,415.9 C1075.9,414.8 1054.8,412.7 1037.9,409.5 C1018.9,405.3 1002.0,400.0 984.0,393.7 M1096.6,415.9 C1075.9,417.0 1054.8,425.4 1037.9,438.1 C1025.2,446.6 1008.3,450.8 990.4,455.1 M1038.3,438.1 C1038.3,459.3 1035.8,484.7 1028.4,510.1 M1025.6,447.0 C1016.8,459.3 1010.4,472.0 1004.1,485.8 M1037.5,409.8 C1025.2,421.2 1006.2,429.7 984.0,432.8 M981.9,416.5 C991.4,418.0 999.9,422.3 1005.2,427.5 M1096.6,415.9 C1088.6,433.9 1082.2,459.3 1079.1,480.5 C1077.0,497.4 1076.5,512.2 1077.0,529.2 M1096.6,415.9 C1105.5,433.9 1116.0,450.8 1122.4,472.0 C1130.8,493.2 1137.1,510.1 1141.4,521.8 M1113.9,450.8 C1105.5,465.7 1099.1,484.7 1102.3,503.8 C1103.4,514.4 1104.4,522.8 1105.5,531.3 M1096.6,415.9 C1109.7,417.0 1122.4,417.0 1130.8,419.1 C1139.3,433.9 1145.6,438.1 1149.8,442.4 C1160.4,450.8 1181.5,459.3 1196.3,463.5 M1147.7,438.1 C1154.0,459.3 1160.4,476.2 1176.2,500.6 M1125.5,469.9 C1139.3,472.0 1156.2,480.5 1168.8,493.2 M1096.6,415.9 C1118.1,414.8 1149.8,413.8 1184.7,412.7 L1213.2,413.1 M1149.8,413.8 C1160.4,400.0 1168.8,391.5 1176.2,386.3 M1096.6,415.9 C1105.5,395.8 1113.9,374.6 1122.4,359.8 C1130.8,347.1 1139.3,336.5 1154.0,329.1 M1119.2,368.3 C1135.0,366.1 1151.9,359.8 1165.7,351.3 M1096.6,415.9 C1088.6,400.0 1075.9,378.8 1063.2,359.8 C1060.1,342.8 1059.0,321.7 1058.0,302.6 M1096.6,415.9 C1103.4,385.2 1099.1,364.0 1097.0,349.2 C1094.9,321.7 1097.0,306.8 1100.2,294.1 M1096.6,415.9 C1080.1,408.5 1063.2,400.0 1050.6,408.5 M1050.6,407.4 C1040.0,391.5 1029.4,381.0 1015.7,371.4 M1073.8,297.3 C1073.8,315.3 1080.1,325.9 1094.9,331.2 M1119.2,298.4 C1113.9,311.1 1115.0,321.7 1116.0,329.1 M1116.0,321.7 C1126.6,319.6 1132.9,313.2 1137.1,304.7 M1035.8,312.1 C1042.1,321.7 1050.6,324.8 1059.0,323.8 M1022.1,325.9 C1031.6,338.6 1040.0,345.0 1048.5,349.2 M1004.1,345.0 C1012.6,351.3 1023.1,353.4 1033.7,352.4 M990.4,378.8 C999.9,383.1 1010.4,381.0 1018.9,374.6 M1155.1,353.4 C1151.9,342.8 1154.0,336.5 1160.4,332.3 M1174.1,386.3 C1173.0,378.8 1173.0,374.6 1176.2,368.3 M1162.5,444.5 C1170.9,436.0 1181.5,431.8 1189.9,431.8 M1176.2,457.2 C1181.5,450.8 1187.8,447.7 1195.2,446.6 M1153.0,517.5 C1150.9,501.7 1151.9,493.2 1156.2,484.7 M1163.5,467.8 C1175.2,469.9 1183.6,474.1 1192.1,481.5 M1055.8,522.8 C1059.0,510.1 1065.3,499.5 1078.0,493.2 M1038.9,512.2 C1044.2,505.9 1054.8,502.7 1063.2,504.8 M1089.6,530.2 C1091.7,520.7 1094.9,514.4 1100.2,509.1 M1103.4,497.4 C1113.9,505.9 1120.3,514.4 1124.5,525.0 M1012.6,494.2 C1021.0,486.8 1027.3,482.6 1034.7,479.4 M990.4,455.1 C995.7,453.0 1002.0,451.9 1005.2,451.9 M1205.8,393.7 C1200.5,395.8 1197.3,402.1 1197.3,408.5" fill="none" stroke="#0a0a0a" stroke-width="1.700"/>
<path d="M1201.8,413.6 L1213.2,409.5 M1198.7,442.1 L1211.0,440.1 M1191.2,463.6 L1201.9,468.1 M1182.2,479.2 L1190.8,487.2 M1166.7,497.2 L1174.1,506.2 M1147.1,511.5 L1156.6,519.6 M1120.9,521.9 L1118.0,534.7 M1101.3,524.7 L1104.6,536.5 M1071.6,521.7 L1061.7,531.3 M1050.1,513.6 L1045.2,524.4 M1026.4,497.1 L1022.7,509.4 M1011.6,480.1 L1003.4,488.6 M1003.8,467.3 L995.7,476.7 M994.6,442.6 L982.2,439.8 M991.5,420.1 L979.9,418.1 M994.4,389.9 L983.1,387.7 M1002.1,368.1 L989.6,367.5 M1011.0,352.6 L999.9,348.1 M1032.8,329.3 L1025.9,319.7 M1048.8,318.8 L1045.7,307.1 M1072.6,309.8 L1068.4,298.6 M1100.3,307.0 L1104.7,295.3 M1116.9,309.0 L1121.2,297.7 M1142.5,317.9 L1153.3,310.2 M1164.4,332.6 L1170.5,322.3 M1182.5,353.0 L1189.4,342.6 M1190.9,367.7 L1203.3,366.9 M1198.1,387.2 L1209.5,385.1" fill="none" stroke="#0a0a0a" stroke-width="1.500"/>
<ellipse cx="683.2" cy="571.8" rx="46" ry="45.3" fill="#202921" stroke="#0a0a0a" stroke-width="1.5"/>
<path d="M683.2,571.8 C674.5,571.4 665.7,570.5 658.6,569.3 C650.6,567.6 643.5,565.5 636.0,562.9 M683.2,571.8 C674.5,572.2 665.7,575.6 658.6,580.7 C653.2,584.1 646.2,585.7 638.6,587.4 M658.7,580.7 C658.7,589.1 657.7,599.3 654.6,609.4 M653.4,584.2 C649.7,589.1 647.0,594.2 644.4,599.7 M658.4,569.3 C653.2,573.9 645.3,577.3 636.0,578.6 M635.1,572.1 C639.1,572.6 642.6,574.3 644.8,576.4 M683.2,571.8 C679.8,579.0 677.2,589.1 675.8,597.6 C675.0,604.3 674.8,610.3 675.0,617.0 M683.2,571.8 C686.9,579.0 691.4,585.7 694.0,594.2 C697.6,602.6 700.2,609.4 702.0,614.1 M690.5,585.7 C686.9,591.7 684.3,599.3 685.6,606.9 C686.0,611.1 686.5,614.5 686.9,617.9 M683.2,571.8 C688.7,572.2 694.0,572.2 697.6,573.1 C701.1,579.0 703.8,580.7 705.5,582.4 C710.0,585.7 718.8,589.1 725.0,590.8 M704.6,580.7 C707.3,589.1 710.0,595.9 716.6,605.6 M695.3,593.4 C701.1,594.2 708.2,597.6 713.5,602.6 M683.2,571.8 C692.2,571.4 705.5,571.0 720.2,570.5 L732.1,570.7 M705.5,571.0 C710.0,565.5 713.5,562.1 716.6,560.0 M683.2,571.8 C686.9,563.8 690.5,555.3 694.0,549.4 C697.6,544.3 701.1,540.1 707.3,537.1 M692.7,552.8 C699.3,551.9 706.4,549.4 712.2,546.0 M683.2,571.8 C679.8,565.5 674.5,557.0 669.2,549.4 C667.9,542.6 667.4,534.2 667.0,526.6 M683.2,571.8 C686.0,559.5 684.3,551.1 683.4,545.2 C682.5,534.2 683.4,528.3 684.7,523.2 M683.2,571.8 C676.3,568.8 669.2,565.5 663.9,568.8 M663.9,568.4 C659.4,562.1 655.0,557.9 649.3,554.1 M673.6,524.5 C673.6,531.7 676.3,535.9 682.5,538.0 M692.7,524.9 C690.5,530.0 690.9,534.2 691.4,537.1 M691.4,534.2 C695.8,533.3 698.4,530.8 700.2,527.4 M657.7,530.4 C660.3,534.2 663.9,535.5 667.4,535.0 M651.9,535.9 C655.9,541.0 659.4,543.5 663.0,545.2 M644.4,543.5 C647.9,546.0 652.4,546.9 656.8,546.4 M638.6,557.0 C642.6,558.7 647.0,557.9 650.6,555.3 M707.8,546.9 C706.4,542.6 707.3,540.1 710.0,538.4 M715.7,560.0 C715.3,557.0 715.3,555.3 716.6,552.8 M710.9,583.2 C714.4,579.8 718.8,578.1 722.4,578.1 M716.6,588.3 C718.8,585.7 721.5,584.5 724.6,584.1 M706.9,612.4 C706.0,606.0 706.4,602.6 708.2,599.3 M711.3,592.5 C716.2,593.4 719.7,595.0 723.3,598.0 M666.1,614.5 C667.4,609.4 670.1,605.2 675.4,602.6 M659.0,610.3 C661.2,607.7 665.7,606.5 669.2,607.3 M680.3,617.4 C681.2,613.6 682.5,611.1 684.7,609.0 M686.0,604.3 C690.5,607.7 693.1,611.1 694.9,615.3 M647.9,603.1 C651.5,600.1 654.1,598.4 657.2,597.2 M638.6,587.4 C640.8,586.6 643.5,586.2 644.8,586.2 M729.0,562.9 C726.8,563.8 725.5,566.3 725.5,568.8" fill="none" stroke="#0a0a0a" stroke-width="1.500"/>
<path d="M727.4,570.9 L732.1,569.2 M726.1,582.2 L731.2,581.4 M722.9,590.8 L727.4,592.7 M719.1,597.1 L722.8,600.3 M712.6,604.2 L715.7,607.9 M704.4,610.0 L708.4,613.2 M693.4,614.1 L692.2,619.2 M685.2,615.2 L686.5,619.9 M672.7,614.0 L668.6,617.8 M663.7,610.8 L661.6,615.1 M653.7,604.2 L652.2,609.1 M647.5,597.4 L644.1,600.8 M644.3,592.3 L640.9,596.1 M640.4,582.4 L635.2,581.4 M639.1,573.5 L634.2,572.7 M640.3,561.4 L635.6,560.5 M643.5,552.7 L638.3,552.5 M647.3,546.5 L642.6,544.8 M656.4,537.2 L653.5,533.4 M663.2,533.0 L661.9,528.4 M673.1,529.5 L671.4,525.0 M684.8,528.3 L686.6,523.7 M691.7,529.1 L693.5,524.6 M702.5,532.7 L707.0,529.6 M711.7,538.6 L714.2,534.4 M719.3,546.7 L722.2,542.5 M722.8,552.5 L728.0,552.2 M725.8,560.4 L730.6,559.5" fill="none" stroke="#0a0a0a" stroke-width="1.300"/>
<path d="M844.9,449.5 Q853.3,431.4 843.0,417.7 Q834.4,432.6 844.9,449.5 Z" fill="#15261a" stroke="#050805" stroke-width="1"/>
<path d="M844.6,444.7 L843.2,420.9" stroke="#24382a" stroke-width="1"/>
<path d="M844.9,449.5 Q866.7,439.4 871.6,419.7 Q852.5,426.8 844.9,449.5 Z" fill="#15261a" stroke="#050805" stroke-width="1"/>
<path d="M848.9,445.0 L868.9,422.7" stroke="#24382a" stroke-width="1"/>
<path d="M844.9,449.5 Q866.5,462.4 886.8,455.9 Q869.4,443.6 844.9,449.5 Z" fill="#15261a" stroke="#050805" stroke-width="1"/>
<path d="M851.2,450.5 L882.6,455.3" stroke="#24382a" stroke-width="1"/>
<path d="M844.9,449.5 Q847.2,472.5 864.0,482.6 Q863.6,463.0 844.9,449.5 Z" fill="#15261a" stroke="#050805" stroke-width="1"/>
<path d="M847.8,454.5 L862.1,479.3" stroke="#24382a" stroke-width="1"/>
<path d="M844.9,449.5 Q827.8,464.2 829.6,483.3 Q845.1,472.0 844.9,449.5 Z" fill="#15261a" stroke="#050805" stroke-width="1"/>
<path d="M842.6,454.6 L831.1,479.9" stroke="#24382a" stroke-width="1"/>
<path d="M844.9,449.5 Q822.4,446.0 808.7,459.7 Q827.6,464.3 844.9,449.5 Z" fill="#15261a" stroke="#050805" stroke-width="1"/>
<path d="M839.5,451.0 L812.3,458.7" stroke="#24382a" stroke-width="1"/>
<path d="M844.9,449.5 Q828.1,433.6 808.7,436.8 Q821.8,451.5 844.9,449.5 Z" fill="#15261a" stroke="#050805" stroke-width="1"/>
<path d="M839.5,447.6 L812.3,438.1" stroke="#24382a" stroke-width="1"/>
<circle cx="844.9" cy="449.5" r="1.500" fill="#4a3a1a"/>
<polygon points="208.0,537.9 264.8,544.8 273.2,572.7 308.7,711.7 359.3,710.3 407.6,887.9 312.6,929.8" fill="#1d1810" stroke="#060504" stroke-width="0.8" stroke-linejoin="round" filter="url(#grain)"/>
<polygon points="208.0,537.9 264.8,544.8 273.2,572.7 217.3,567.0" fill="#2b2015" filter="url(#grain)"/>
<polygon points="195.9,540.1 208.0,537.9 312.6,929.8 301.8,931.4" fill="url(#brick)" stroke="#0c0a08" stroke-width="0.8" stroke-linejoin="round"/>
<polygon points="312.6,929.8 407.6,887.9 444.7,1028.0 354.5,1095.0" fill="#404040" stroke="#000" stroke-width="1.2" stroke-linejoin="round"/>
<polygon points="301.8,931.4 312.6,929.8 354.5,1095.0 346.5,1098.2" fill="#6b6b6b" stroke="#000" stroke-width="1" stroke-linejoin="round"/>
<polygon points="264.8,544.8 351.6,522.0 355.3,523.3 368.3,576.5 329.2,585.8 273.2,572.7" fill="#141315" stroke="#000" stroke-width="0.8" stroke-linejoin="round"/>
<polygon points="303.1,563.4 354.4,531.3 367.4,575.5 329.2,584.8" fill="#19181b"/>
<polygon points="273.2,572.7 329.2,585.8 359.0,698.6 308.7,711.7" fill="#111012" stroke="#000" stroke-width="0.8" stroke-linejoin="round"/>
<polyline points="217.3,567.5 273.2,573.1 354.4,531.1" fill="none" stroke="#000" stroke-width="2.2"/>
<polyline points="217.3,567.1 273.2,572.7 354.4,530.8" fill="none" stroke="#909090" stroke-width="1.1"/>
<polygon points="355.3,523.3 400.0,535.4 410.3,580.2 368.3,575.5" fill="#1a160f" stroke="#000" stroke-width="0.8" stroke-linejoin="round" filter="url(#grain)"/>
<polygon points="368.3,575.5 410.3,580.2 377.7,589.1 329.2,585.8" fill="#15110b" stroke="#000" stroke-width="0.8" stroke-linejoin="round"/>
<polygon points="332.9,585.8 377.7,589.5 403.8,693.9 359.0,698.6" fill="#1a160f" stroke="#000" stroke-width="0.8" stroke-linejoin="round" filter="url(#grain)"/>
<polygon points="329.2,585.8 332.9,585.8 359.0,698.6 356.2,699.3" fill="#111" stroke="#000" stroke-width="0.6" stroke-linejoin="round"/>
<polygon points="308.7,711.7 359.0,698.6 403.8,693.9 361.8,706.6 311.5,712.8" fill="#17130d" stroke="#000" stroke-width="0.6" stroke-linejoin="round"/>
<polyline points="346.5,1098.2 301.8,931.4 195.5,540.6 203.6,537.6 212.5,537.6 264.6,544.8 351.6,522.0 355.3,523.3 372.0,527.2" fill="none" stroke="#000" stroke-width="2" stroke-linejoin="round"/>
<polyline points="346.5,1098.2 354.5,1095.0 444.7,1028.0 407.6,887.9" fill="none" stroke="#000" stroke-width="1.6" stroke-linejoin="round"/>
<polygon points="371.9,527.2 656.9,449.4 656.9,457.8 513.4,495.3 377.5,532.0" fill="#2c2a26" stroke="#000" stroke-width="0.8" stroke-linejoin="round"/>
<polygon points="377.5,532.0 513.4,495.3 514.4,505.6 400.0,535.6" fill="#1b1a18" stroke="#000" stroke-width="0.6" stroke-linejoin="round"/>
<polygon points="513.4,495.3 656.9,457.8 681.3,550.6 538.8,588.1" fill="#161516" stroke="#000" stroke-width="1" stroke-linejoin="round"/>
<polygon points="656.9,457.8 655.8,450.0 659.5,451.0 670.0,464.4 691.5,554.6 681.3,550.6" fill="#2b2a27" stroke="#000" stroke-width="0.8" stroke-linejoin="round"/>
<polygon points="538.8,588.1 681.3,550.6 691.5,554.6 557.5,592.8" fill="#23221f" stroke="#000" stroke-width="0.8" stroke-linejoin="round"/>
<polygon points="661.7,452.5 1167.7,315.0 1166.5,325.5 671.7,462.3" fill="#1c1b19" stroke="#000" stroke-width="0.8" stroke-linejoin="round"/>
<polygon points="661.7,452.5 1167.7,315.0 1168.0,318.0 664.0,455.6" fill="#34302b"/>
<polyline points="661.7,452.5 1167.7,315.0" fill="none" stroke="#000" stroke-width="1.8"/>
<polyline points="371.9,527.2 656.9,449.4" fill="none" stroke="#000" stroke-width="1.8"/>
<polyline points="664.5,456.2 1168.0,318.6" fill="none" stroke="#000" stroke-width="0.7"/>
<polygon points="748.5,427.0 751.8,426.5 755.0,441.4 752.0,443.0" fill="#3b3b39" stroke="#000" stroke-width="0.8" stroke-linejoin="round"/>
<polygon points="803.5,412.1 806.8,411.6 810.0,426.5 807.0,428.1" fill="#3b3b39" stroke="#000" stroke-width="0.8" stroke-linejoin="round"/>
<polygon points="888.5,389.0 891.8,388.5 895.0,403.4 892.0,405.0" fill="#3b3b39" stroke="#000" stroke-width="0.8" stroke-linejoin="round"/>
<polygon points="979.5,364.2 982.8,363.7 986.0,378.7 983.0,380.3" fill="#3b3b39" stroke="#000" stroke-width="0.8" stroke-linejoin="round"/>
<polygon points="1071.5,339.2 1074.8,338.7 1078.0,353.7 1075.0,355.3" fill="#3b3b39" stroke="#000" stroke-width="0.8" stroke-linejoin="round"/>
<polygon points="1167.7,313.0 1314.2,274.2 1316.0,279.0 1300.5,294.5 1176.4,327.5 1172.0,316.0" fill="#3f3f41" stroke="#000" stroke-width="0.9" stroke-linejoin="round"/>
<polygon points="1167.7,313.0 1314.2,274.2 1315.2,277.0 1172.2,316.2" fill="#4c4e5c"/>
<polyline points="1167.7,313.0 1314.2,274.2 1316.0,279.0 1300.5,294.5 1176.4,327.5" fill="none" stroke="#000" stroke-width="1.7" stroke-linejoin="round"/>
<polyline points="1172.2,316.4 1315.0,277.6" fill="none" stroke="#000" stroke-width="0.9"/>
<polygon points="1165.4,315.4 1168.0,313.7 1258.8,659.7 1248.8,659.7" fill="#4b4b4d" stroke="#000" stroke-width="0.8" stroke-linejoin="round"/>
<polygon points="1191.5,409.5 1212.2,480.0 1258.8,659.7 1250.3,659.7 1207.1,480.0 1199.0,445.0" fill="#ececec"/>
<polygon points="1168.0,313.7 1172.2,313.7 1263.0,659.7 1258.8,659.7" fill="#3b3733"/>
<polygon points="1172.2,313.7 1176.5,319.0 1265.8,659.7 1263.0,659.7" fill="#1c1c1c"/>
<polyline points="1176.5,319.0 1265.8,659.7" fill="none" stroke="#000" stroke-width="0.8"/>
<polygon points="383.5,899.2 749.0,796.1 1259.0,660.5 1260.5,667.5 749.0,803.2 383.5,903.7" fill="#24221f" stroke="#000" stroke-width="0.6" stroke-linejoin="round"/>
<polyline points="420.0,890.8 749.0,798.6 874.0,765.4" fill="none" stroke="#46423b" stroke-width="1.4"/>
<polygon points="874.0,764.3 1258.0,661.6 1258.6,664.2 874.0,767.3" fill="#6b665b"/>
<polygon points="1264.7,658.0 1366.0,630.4 1366.0,639.3 1266.4,666.6" fill="#25252b" stroke="#000" stroke-width="0.6" stroke-linejoin="round"/>
<polygon points="1265.5,661.5 1366.0,634.2 1366.0,636.6 1266.0,664.0" fill="#4c4e5e"/>
<polygon points="1250.0,670.2 1267.1,667.8 1303.9,809.0 1294.0,808.0 1284.3,800.4" fill="#2d2d35" stroke="#000" stroke-width="1" stroke-linejoin="round"/>
<polygon points="1262.5,668.5 1267.1,667.8 1303.9,809.0 1298.5,808.6" fill="#545970"/>
<polyline points="1264.0,669.0 1300.5,808.0" fill="none" stroke="#9aa0c0" stroke-width="0.8"/>
<polyline points="1267.1,667.8 1303.9,809.0" fill="none" stroke="#000" stroke-width="1"/>
<path d="M1027 822V832H1215V822.800 M1074 822V832 M1097 825V832 M1121 822.8V832 M1144 825V832 M1168 822.8V832 M1191 825V832 M1031.8 827.3V832 M1035.8 827.3V832 M1040.9 827.3V832 M1046.1 827.3V832 M1050.1 825.5V832 M1054.7 827.3V832 M1059.8 827.3V832 M1065 827.3V832 M1069 827.3V832" fill="none" stroke="#000" stroke-width="2"/>
<text x="6" y="147.500" font-family="Liberation Sans" font-size="12" letter-spacing=".4" fill="#000">Top</text>
<rect x="0" y="133" width="1.500" height="1019" fill="#404040"/>
<rect x="1918" y="133" width="1" height="1019" fill="#d4d0c8"/><rect x="1919" y="133" width="1" height="1019" fill="#fff"/>
</svg>
<div class="panel" style="left:1365px;top:132px;width:235px;height:230px"></div>
<div class="ptitle" style="left:1368px;top:135px;width:228px">Shadow Settings</div>
<div class="xbtn" style="left:1583px;top:137px"><svg class="a" style="left:1px;top:1px" width="8" height="7"><path d="M1 0.500l6 6M7 0.500l-6 6" stroke="#000" stroke-width="1.600"/></svg></div>
<div class="btn" style="left:1370px;top:153px;width:24px;height:23px"></div>
<svg class="a" style="left:1373px;top:156px" width="18" height="18" viewBox="0 0 18 18"><path d="M4 15l9 1 4-2-8-1z" fill="#000" opacity=".75"/><path d="M3 4l6-2 6 2v8l-6 3-6-3z" fill="#444"/><path d="M3 4l6-2 6 2-6 2.500z" fill="#e8e8e8"/><path d="M9 6.500v8.500l6-3V4z" fill="#222"/><path d="M3 4l6 2.500V15l-6-3z" fill="#6a6a6a"/></svg>
<div class="sunk" style="left:1398px;top:154px;width:169px;height:21px"></div>
<div class="t" style="left:1402px;top:159px;letter-spacing:-.1px">UTC+01:00</div>
<div class="btn" style="left:1550px;top:156px;width:15px;height:17px"><svg class="a" style="left:3px;top:5px" width="8" height="5"><path d="M0 0h7L3.500 4z" fill="#000"/></svg></div>
<svg class="a" style="left:1576px;top:155px" width="14" height="20" viewBox="0 0 14 20"><rect x="0.500" y="0.500" width="13" height="19" fill="#fff" stroke="#c8c8c8"/><rect x="1" y="1" width="12" height="9" fill="#000"/><rect x="3" y="4" width="8" height="2.500" fill="#fff"/><path d="M3 16.500L7 12.500l4 4z" fill="#000"/></svg>
<div class="t" style="left:1370px;top:183px;">Time</div>
<div class="a" style="left:1400px;top:185px;width:117px;height:8px;border:1px solid;border-color:#808080 #fff #fff #808080;background:linear-gradient(90deg,#fff 0,#a8c4e0 30%,#7090d8 55%,#4858e0 72%,#283090 88%,#101030 100%)"></div>
<div class="btn" style="left:1502px;top:182px;width:6px;height:13px"></div>
<div class="t" style="left:1400px;top:194px;font-size:9px;font-weight:bold;color:#002;height:7.500px;overflow:hidden;line-height:11px;top:194px;letter-spacing:-.1px">04:48 AM&nbsp;&nbsp;&nbsp;Noon&nbsp;&nbsp;&nbsp;09:14 PM</div>
<div class="sunk" style="left:1525px;top:181px;width:69px;height:19px"></div>
<div class="t" style="left:1529px;top:185px;">20:00</div>
<div class="btn" style="left:1577px;top:183px;width:15px;height:7px"><svg class="a" style="left:3px;top:0px" width="8" height="5"><path d="M1 4l3-3 3 3z" fill="#000"/></svg></div>
<div class="btn" style="left:1577px;top:190px;width:15px;height:7px"><svg class="a" style="left:3px;top:0px" width="8" height="5"><path d="M1 1l3 3 3-3z" fill="#000"/></svg></div>
<div class="t" style="left:1370px;top:210px;">Date</div>
<div class="a" style="left:1400px;top:211px;width:117px;height:8px;border:1px solid;border-color:#808080 #fff #fff #808080;background:linear-gradient(90deg,#fff 0,#ffe8a0 18%,#f8b820 38%,#f06010 52%,#f01008 68%,#f88080 85%,#fff 100%)"></div>
<div class="btn" style="left:1451px;top:208px;width:6px;height:13px"></div>
<div class="t" style="left:1403px;top:221px;font-size:9px;font-weight:bold;color:#002;height:5.500px;overflow:hidden;line-height:11px;top:221px">J&nbsp;&nbsp;F&nbsp;&nbsp;M&nbsp;A&nbsp;M&nbsp;J&nbsp;&nbsp;J&nbsp;&nbsp;A&nbsp;&nbsp;S&nbsp;&nbsp;O&nbsp;&nbsp;N&nbsp;D</div>
<div class="sunk" style="left:1525px;top:206px;width:69px;height:20px"></div>
<div class="t" style="left:1531px;top:211px;">6 /21</div>
<div class="btn" style="left:1577px;top:208px;width:15px;height:16px"><svg class="a" style="left:3px;top:5px" width="8" height="5"><path d="M0 0h7L3.500 4z" fill="#000"/></svg></div>
<div class="hline" style="left:1369px;top:234px;width:226px"></div>
<div class="t" style="left:1370px;top:245px;">Light</div>
<div class="a" style="left:1400px;top:249px;width:117px;height:8px;border:1px solid;border-color:#808080 #fff #fff #808080;background:linear-gradient(90deg,#000,#fff)"></div>
<div class="btn" style="left:1498px;top:246px;width:6px;height:13px"></div>
<div class="sunk" style="left:1523px;top:244px;width:39px;height:22px"></div>
<div class="t" style="left:1527px;top:248px;">88</div>
<div class="btn" style="left:1545px;top:246px;width:15px;height:9px"><svg class="a" style="left:3px;top:1px" width="8" height="5"><path d="M1 4l3-3 3 3z" fill="#000"/></svg></div>
<div class="btn" style="left:1545px;top:255px;width:15px;height:9px"><svg class="a" style="left:3px;top:1px" width="8" height="5"><path d="M1 1l3 3 3-3z" fill="#000"/></svg></div>
<div class="t" style="left:1370px;top:272px;">Dark</div>
<div class="a" style="left:1400px;top:276px;width:117px;height:8px;border:1px solid;border-color:#808080 #fff #fff #808080;background:linear-gradient(90deg,#000,#fff)"></div>
<div class="btn" style="left:1404px;top:273px;width:6px;height:13px"></div>
<div class="sunk" style="left:1523px;top:271px;width:39px;height:22px"></div>
<div class="t" style="left:1527px;top:274.5px;">5</div>
<div class="btn" style="left:1545px;top:273px;width:15px;height:9px"><svg class="a" style="left:3px;top:1px" width="8" height="5"><path d="M1 4l3-3 3 3z" fill="#000"/></svg></div>
<div class="btn" style="left:1545px;top:282px;width:15px;height:9px"><svg class="a" style="left:3px;top:1px" width="8" height="5"><path d="M1 1l3 3 3-3z" fill="#000"/></svg></div>
<div class="hline" style="left:1369px;top:297px;width:226px"></div>
<div class="cb" style="left:1370px;top:302px"></div>
<div class="t" style="left:1388.5px;top:303.5px;">Use sun for shading</div>
<div class="t" style="left:1370.5px;top:321px;">Display:</div>
<div class="cb" style="left:1370px;top:336px"><svg width="9" height="9" viewBox="0 0 9 9"><path d="M0.800 3l2.700 2.700L8.300 1v2.800L3.500 8.600 0.800 5.900z" fill="#000"/></svg></div>
<div class="t" style="left:1388.5px;top:337.5px;">On faces</div>
<div class="cb" style="left:1437px;top:336px"><svg width="9" height="9" viewBox="0 0 9 9"><path d="M0.800 3l2.700 2.700L8.300 1v2.800L3.500 8.600 0.800 5.900z" fill="#000"/></svg></div>
<div class="t" style="left:1455.5px;top:337.5px;">On ground</div>
<div class="cb" style="left:1515px;top:336px"></div>
<div class="t" style="left:1533px;top:337.5px;">From edges</div>
<div class="panel" style="left:1365px;top:365px;width:235px;height:384px"></div>
<div class="ptitle" style="left:1369px;top:369px;width:228px">Scenes</div>
<div class="xbtn" style="left:1583px;top:371px"><svg class="a" style="left:1px;top:1px" width="8" height="7"><path d="M1 0.500l6 6M7 0.500l-6 6" stroke="#000" stroke-width="1.600"/></svg></div>
<svg class="a" style="left:1369px;top:386px" width="228" height="24" viewBox="1369 386 228 24"><g fill="none" stroke="#000" stroke-width="2.600"><path d="M1377.300 397.500a5.600 5.600 0 0 1 9.800-3.200"/><path d="M1388.300 399.300a5.600 5.600 0 0 1-9.800 3.200"/></g><path d="M1384.500 396.300l5.300.4.300-5.700z M1381 400.500l-5.300-.4-.3 5.700z" fill="#000"/><circle cx="1406.5" cy="398.2" r="7.300" fill="#fff" stroke="#000" stroke-width="1.900"/><path d="M1401.7 398.2h9.600" stroke="#000" stroke-width="2.600"/><path d="M1406.5 393.4v9.600" stroke="#000" stroke-width="2.600"/><circle cx="1430.5" cy="398.2" r="7.300" fill="#fff" stroke="#000" stroke-width="1.900"/><path d="M1425.7 398.2h9.600" stroke="#000" stroke-width="2.600"/><path d="M1486.200 391.500c-3.500 0-4.700 1.500-4.700 4.500v3" fill="none" stroke="#000" stroke-width="3"/><path d="M1476.700 398.300h9.600l-4.800 5.600z" fill="#000"/><path d="M1501 402.500c3.500 0 4.700-1.500 4.700-4.500v-3" fill="none" stroke="#000" stroke-width="3"/><path d="M1500.900 396.300h9.600l-4.800-5.600z" fill="#000"/><g fill="#fff" stroke="#000" stroke-width="1.200"><rect x="1520.600" y="391.100" width="4.600" height="4.200"/><rect x="1520.600" y="398.800" width="4.600" height="4.200"/></g><path d="M1527 391.500h7.500M1527 393.300h7.500M1527 395.100h5.200M1527 399.100h7.500M1527 400.900h7.500M1527 402.700h5.200" stroke="#000" stroke-width=".9"/><path d="M1537.800 394.800h9.600l-4.800 5.100z" fill="#404040"/><rect x="1554.500" y="387.700" width="13.100" height="18.600" fill="#fff" stroke="#c8c8c8" stroke-width=".6"/><rect x="1554.500" y="387.700" width="13.100" height="10.300" fill="#000"/><rect x="1557.800" y="391.600" width="6.700" height="2.200" fill="#fff"/><path d="M1556.500 403.800l4.600-4 4.600 4z" fill="#000"/><path d="M1583.5 389l8 8-8 8z" fill="#000"/><rect x="1579" y="392.5" width="6.300" height="9" fill="#fff" stroke="#1a4cb0" stroke-width="1"/><rect x="1579.5" y="393" width="5.300" height="2" fill="#5aa4f4"/><path d="M1580.5 396.5h3.300M1580.5 398.2h3.300M1580.5 399.9h3.300" stroke="#333" stroke-width=".8"/></svg>
<div class="a" style="left:1370px;top:413px;width:211px;height:122px;background:#fff;overflow:hidden">
<div class="a" style="left:0;top:-40px;width:211px;height:63px;border:3px solid #0a246a"><div class="a" style="left:0;top:0;width:64px;height:57px;background:#a0a0a0"></div><div class="a" style="left:0;top:37px;width:64px;height:3px;background:#000"></div></div>
<div class="a" style="left:0;top:26px;width:211px;height:70px;border:3px solid #0a246a"><div class="a" style="left:0;top:0;width:64px;height:64px;background:#a0a0a0"></div>
<svg class="a" style="left:48px;top:48px" width="14" height="14" viewBox="0 0 14 14"><path d="M3.200 9.800L11.200 1.800l1.500 1.500-8 8z" fill="#e01010" stroke="#500" stroke-width=".5"/><path d="M1 13.500l2.200-3.700 1.500 1.500z" fill="#e8d090" stroke="#222" stroke-width=".5"/><path d="M1 13.500l.8-1.300.5.500z" fill="#000"/></svg>
</div>
<div class="a" style="left:3px;top:103px;width:64px;height:19px;background:#a0a0a0"></div><div class="a" style="left:3px;top:119px;width:64px;height:3px;background:#000"></div>
</div>
<div class="t" style="left:1440.5px;top:443.5px;letter-spacing:0">Summer Solstice 20:00</div>
<div class="t" style="left:1440.5px;top:457px;letter-spacing:-.15px">Photo: <i style="color:#808080;letter-spacing:-.9px">None</i></div>
<div class="t" style="left:1440.5px;top:470px;letter-spacing:0"><i style="color:#808080;letter-spacing:-.33px">No Description</i></div>
<div class="t" style="left:1440.5px;top:517.5px;letter-spacing:0;height:13px">Autumn Equinox 08:00</div>
<div class="a" style="left:1440px;top:531px;width:100px;height:4px;overflow:hidden"><div class="t" style="left:0.500px;top:0;letter-spacing:0">Photo: <i style="color:#808080">None</i></div></div>
<div class="a" style="left:1581px;top:413px;width:16px;height:122px;background:#fff;background-image:conic-gradient(#d4d0c8 25%,#fff 0 50%,#d4d0c8 0 75%,#fff 0);background-size:2px 2px"></div>
<div class="btn" style="left:1581px;top:413px;width:16px;height:16px"><svg class="a" style="left:3px;top:4px" width="8" height="5"><path d="M0 4.500h7L3.500 0.500z" fill="#000"/></svg></div>
<div class="btn" style="left:1581px;top:483px;width:16px;height:15px"></div>
<div class="btn" style="left:1581px;top:519px;width:16px;height:16px"><svg class="a" style="left:3px;top:5px" width="8" height="5"><path d="M0 0h7L3.500 4z" fill="#000"/></svg></div>
<div class="a" style="left:1369px;top:535px;width:229px;height:1px;background:#808080"></div>
<div class="cb" style="left:1441px;top:547px"><svg width="9" height="9" viewBox="0 0 9 9"><path d="M0.800 3l2.700 2.700L8.300 1v2.800L3.500 8.600 0.800 5.900z" fill="#000"/></svg></div>
<div class="t" style="left:1459.5px;top:549px;"><u>I</u>nclude in animation</div>
<div class="t" style="right:484px;top:574px;">Name:</div>
<div class="sunk" style="left:1441px;top:566px;width:152px;height:20px"></div>
<div class="t" style="left:1445.5px;top:570px;letter-spacing:-.28px">Summer Solstice 20:00</div>
<div class="t" style="right:484px;top:595px;">Description:</div>
<div class="sunk" style="left:1441px;top:589px;width:152px;height:20px"></div>
<div class="t" style="right:484px;top:614px;">Properties</div>
<div class="t" style="right:484px;top:626.5px;">to save:</div>
<div class="cb" style="left:1439px;top:616px"><svg width="9" height="9" viewBox="0 0 9 9"><path d="M0.800 3l2.700 2.700L8.300 1v2.800L3.500 8.600 0.800 5.900z" fill="#000"/></svg></div>
<div class="t" style="left:1458px;top:618px;letter-spacing:-.27px">Camera Location</div>
<div class="cb" style="left:1439px;top:634px"><svg width="9" height="9" viewBox="0 0 9 9"><path d="M0.800 3l2.700 2.700L8.300 1v2.800L3.500 8.600 0.800 5.900z" fill="#000"/></svg></div>
<div class="t" style="left:1458px;top:636px;letter-spacing:-.27px">Hidden Geometry</div>
<div class="cb" style="left:1439px;top:652px"><svg width="9" height="9" viewBox="0 0 9 9"><path d="M0.800 3l2.700 2.700L8.300 1v2.800L3.500 8.600 0.800 5.900z" fill="#000"/></svg></div>
<div class="t" style="left:1458px;top:654px;letter-spacing:-.27px">Visible Layers</div>
<div class="cb" style="left:1439px;top:670px"><svg width="9" height="9" viewBox="0 0 9 9"><path d="M0.800 3l2.700 2.700L8.300 1v2.800L3.500 8.600 0.800 5.900z" fill="#000"/></svg></div>
<div class="t" style="left:1458px;top:672px;letter-spacing:-.27px">Active Section Planes</div>
<div class="cb" style="left:1439px;top:688px"><svg width="9" height="9" viewBox="0 0 9 9"><path d="M0.800 3l2.700 2.700L8.300 1v2.800L3.500 8.600 0.800 5.900z" fill="#000"/></svg></div>
<div class="t" style="left:1458px;top:690px;letter-spacing:-.27px">Style and Fog</div>
<div class="cb" style="left:1439px;top:706px"><svg width="9" height="9" viewBox="0 0 9 9"><path d="M0.800 3l2.700 2.700L8.300 1v2.800L3.500 8.600 0.800 5.900z" fill="#000"/></svg></div>
<div class="t" style="left:1458px;top:708px;letter-spacing:-.27px">Shadow Settings</div>
<div class="cb" style="left:1439px;top:724px"><svg width="9" height="9" viewBox="0 0 9 9"><path d="M0.800 3l2.700 2.700L8.300 1v2.800L3.500 8.600 0.800 5.900z" fill="#000"/></svg></div>
<div class="t" style="left:1458px;top:726px;letter-spacing:-.27px">Axes Location</div>
<div class="panel" style="left:1601px;top:130px;width:316px;height:947px"></div>
<div class="ptitle" style="left:1605px;top:133px;width:309px">Layers</div>
<div class="xbtn" style="left:1899px;top:135px"><svg class="a" style="left:1px;top:1px" width="8" height="7"><path d="M1 0.500l6 6M7 0.500l-6 6" stroke="#000" stroke-width="1.600"/></svg></div>
<svg class="a" style="left:1605px;top:150px" width="309" height="24" viewBox="1605 150 309 24"><circle cx="1618.5" cy="162.5" r="7.300" fill="#fff" stroke="#000" stroke-width="1.900"/><path d="M1613.7 162.5h9.600" stroke="#000" stroke-width="2.600"/><path d="M1618.5 157.7v9.600" stroke="#000" stroke-width="2.600"/><circle cx="1642.5" cy="162.5" r="7.300" fill="#fff" stroke="#000" stroke-width="1.900"/><path d="M1637.7 162.5h9.600" stroke="#000" stroke-width="2.600"/><path d="M1899.2 154l8 8-8 8z" fill="#000"/><rect x="1894.7" y="157.5" width="6.300" height="9" fill="#fff" stroke="#1a4cb0" stroke-width="1"/><rect x="1895.2" y="158" width="5.300" height="2" fill="#5aa4f4"/><path d="M1896.2 161.5h3.300M1896.2 163.2h3.300M1896.2 164.9h3.300" stroke="#333" stroke-width=".8"/></svg>
<div class="btn" style="left:1605px;top:176px;width:218px;height:16px"></div>
<div class="btn" style="left:1823px;top:176px;width:49px;height:16px"></div>
<div class="btn" style="left:1872px;top:176px;width:42px;height:16px"></div>
<div class="t" style="left:1612.5px;top:178.5px;">Name</div>
<div class="t" style="left:1830.5px;top:178.5px;">Visible</div>
<div class="t" style="left:1880px;top:178.5px;">C...</div>
<svg class="a" style="left:1654px;top:182px" width="10" height="8"><path d="M0.500 0.500h8l-4 7z" fill="#d4d0c8" stroke="#808080"/><path d="M8.500 0.500l-4 7" stroke="#fff"/></svg>
<div class="a" style="left:1605px;top:192px;width:308px;height:881px;background:#fff">
<div class="lrow" style="top:1px"><div class="radio on"></div><div class="t" style="left:19.500px;top:3px">Layer0</div><div class="lcb"><svg width="9" height="9" viewBox="0 0 9 9"><path d="M0.800 3l2.700 2.700L8.300 1v2.800L3.500 8.600 0.800 5.900z" fill="#000"/></svg></div><div class="sw" style="background:#0868a4;top:1px"></div></div>
<div class="lrow" style="top:18px"><div class="radio"></div><div class="t" style="left:19.500px;top:3px">2D Existing trees and shrubs</div><div class="lcb"><svg width="9" height="9" viewBox="0 0 9 9"><path d="M0.800 3l2.700 2.700L8.300 1v2.800L3.500 8.600 0.800 5.900z" fill="#000"/></svg></div><div class="sw" style="background:#9a1414;top:1px"></div></div>
<div class="lrow" style="top:35px"><div class="radio"></div><div class="t" style="left:19.500px;top:3px">2D Phase 1 new trees and shrubs</div><div class="lcb"></div><div class="sw" style="background:#009c84;top:1px"></div></div>
<div class="lrow" style="top:52px"><div class="radio"></div><div class="t" style="left:19.500px;top:3px">2D Phase 2 new trees and shrubs</div><div class="lcb"></div><div class="sw" style="background:#004c8c;top:1px"></div></div>
<div class="lrow" style="top:69px"><div class="radio"></div><div class="t" style="left:19.500px;top:3px">Key</div><div class="lcb"></div><div class="sw" style="background:#d04800;top:1px"></div></div>
<div class="lrow" style="top:86px"><div class="radio"></div><div class="t" style="left:19.500px;top:3px">Layer1</div><div class="lcb"></div><div class="sw" style="background:#6c4400;top:1px"></div></div>
<div class="lrow" style="top:103px"><div class="radio"></div><div class="t" style="left:19.500px;top:3px">New beds</div><div class="lcb"></div><div class="sw" style="background:#6c4400;top:1px"></div></div>
<div class="lrow" style="top:120px"><div class="radio"></div><div class="t" style="left:19.500px;top:3px">New Hugle bed</div><div class="lcb"></div><div class="sw" style="background:#7878a0;top:1px"></div></div>
<div class="lrow" style="top:137px"><div class="radio"></div><div class="t" style="left:19.500px;top:3px">New Paths</div><div class="lcb"></div><div class="sw" style="background:#f0b478;top:1px"></div></div>
<div class="lrow" style="top:154px"><div class="radio"></div><div class="t" style="left:19.500px;top:3px">New Phase 1 Labels</div><div class="lcb"></div><div class="sw" style="background:#b04800;top:1px"></div></div>
<div class="lrow" style="top:171px"><div class="radio"></div><div class="t" style="left:19.500px;top:3px">New Phase 2 labels</div><div class="lcb"></div><div class="sw" style="background:#7878a0;top:1px"></div></div>
<div class="lrow" style="top:188px"><div class="radio"></div><div class="t" style="left:19.500px;top:3px">New Pond</div><div class="lcb"></div><div class="sw" style="background:#00ffff;top:1px"></div></div>
<div class="lrow" style="top:205px"><div class="radio"></div><div class="t" style="left:19.500px;top:3px">New slug free planters</div><div class="lcb"></div><div class="sw" style="background:#009484;top:1px"></div></div>
<div class="lrow" style="top:222px"><div class="radio"></div><div class="t" style="left:19.500px;top:3px">Old flower bed</div><div class="lcb"></div><div class="sw" style="background:#7878a0;top:1px"></div></div>
<div class="lrow" style="top:239px"><div class="radio"></div><div class="t" style="left:19.500px;top:3px">Old Gate</div><div class="lcb"><svg width="9" height="9" viewBox="0 0 9 9"><path d="M0.800 3l2.700 2.700L8.300 1v2.800L3.500 8.600 0.800 5.900z" fill="#000"/></svg></div><div class="sw" style="background:#6c4400;top:1px"></div></div>
<div class="lrow" style="top:256px"><div class="radio"></div><div class="t" style="left:19.500px;top:3px">Old Labels</div><div class="lcb"></div><div class="sw" style="background:#009c84;top:1px"></div></div>
<div class="lrow" style="top:273px"><div class="radio"></div><div class="t" style="left:19.500px;top:3px">Old Lawn</div><div class="lcb"></div><div class="sw" style="background:#9c00ff;top:1px"></div></div>
<div class="lrow" style="top:290px"><div class="radio"></div><div class="t" style="left:19.500px;top:3px">Old Removble fence</div><div class="lcb"><svg width="9" height="9" viewBox="0 0 9 9"><path d="M0.800 3l2.700 2.700L8.300 1v2.800L3.500 8.600 0.800 5.900z" fill="#000"/></svg></div><div class="sw" style="background:#7878a0;top:1px"></div></div>
</div>
<div class="a" style="left:0;top:1152px;width:1920px;height:1px;background:#fff"></div>
<div class="a" style="left:0;top:1153px;width:1920px;height:27px;background:#d4d0c8"></div>
<svg class="a" style="left:3px;top:1158px" width="20" height="20" viewBox="0 0 20 20"><circle cx="10" cy="10" r="8.600" fill="#f4ecd8" stroke="#80500a" stroke-width="2.300"/><path d="M10 4.500a3 3.200 0 0 1 3 3.200c0 2-2.300 3-2.500 7.300h-1c-.2-4.300-2.500-5.300-2.500-7.300a3 3.200 0 0 1 3-3.200z" fill="#e83030" stroke="#601010" stroke-width=".8"/></svg>
<svg class="a" style="left:31px;top:1158px" width="20" height="20" viewBox="0 0 20 20"><circle cx="10" cy="10" r="8.600" fill="#f4ecd8" stroke="#80500a" stroke-width="2.300"/><circle cx="10" cy="5.800" r="1.600" fill="#000"/><path d="M7.800 8h4.400v4.500h-1v3.500h-2.400v-3.500h-1z" fill="#000"/></svg>
<svg class="a" style="left:59px;top:1158px" width="20" height="20" viewBox="0 0 20 20"><circle cx="10" cy="10" r="8.600" fill="#f4ecd8" stroke="#80500a" stroke-width="2.300"/><text x="10" y="15" text-anchor="middle" font-family="Liberation Serif" font-size="15" fill="#c0b498">G</text></svg>
<div class="sep" style="left:88px;top:1157px;height:22px"></div>
<svg class="a" style="left:97px;top:1158px" width="20" height="20" viewBox="0 0 20 20"><defs><radialGradient id="hq" cx=".4" cy=".35" r=".7"><stop offset="0" stop-color="#fff"/><stop offset=".6" stop-color="#fff"/><stop offset="1" stop-color="#b8d0f0"/></radialGradient></defs><circle cx="10" cy="10" r="8.500" fill="url(#hq)" stroke="#16406c" stroke-width="2.500"/><text x="10" y="15" text-anchor="middle" font-family="Liberation Sans" font-weight="bold" font-size="14" fill="#000">?</text></svg>
<div class="t" style="left:124.500px;top:1161.300px;font-size:12px;line-height:15px;letter-spacing:.4px">Select objects. Shift to extend select. Drag mouse to select multiple.</div>
<div class="sep" style="left:1576px;top:1157px;height:22px"></div>
<div class="t" style="left:1625px;top:1161.300px;font-size:12px;line-height:15px;letter-spacing:.4px">Measurements</div>
<div class="a" style="left:1714px;top:1156px;width:202px;height:24px;border:1px solid;border-color:#808080 #fff #fff #808080"></div>
<svg class="a" style="left:1906px;top:1168px" width="12" height="12"><path d="M11 2L2 11M11 6L6 11M11 10L10 11" stroke="#808080"/><path d="M11 3L3 11M11 7L7 11" stroke="#fff"/></svg>
</body></html>
